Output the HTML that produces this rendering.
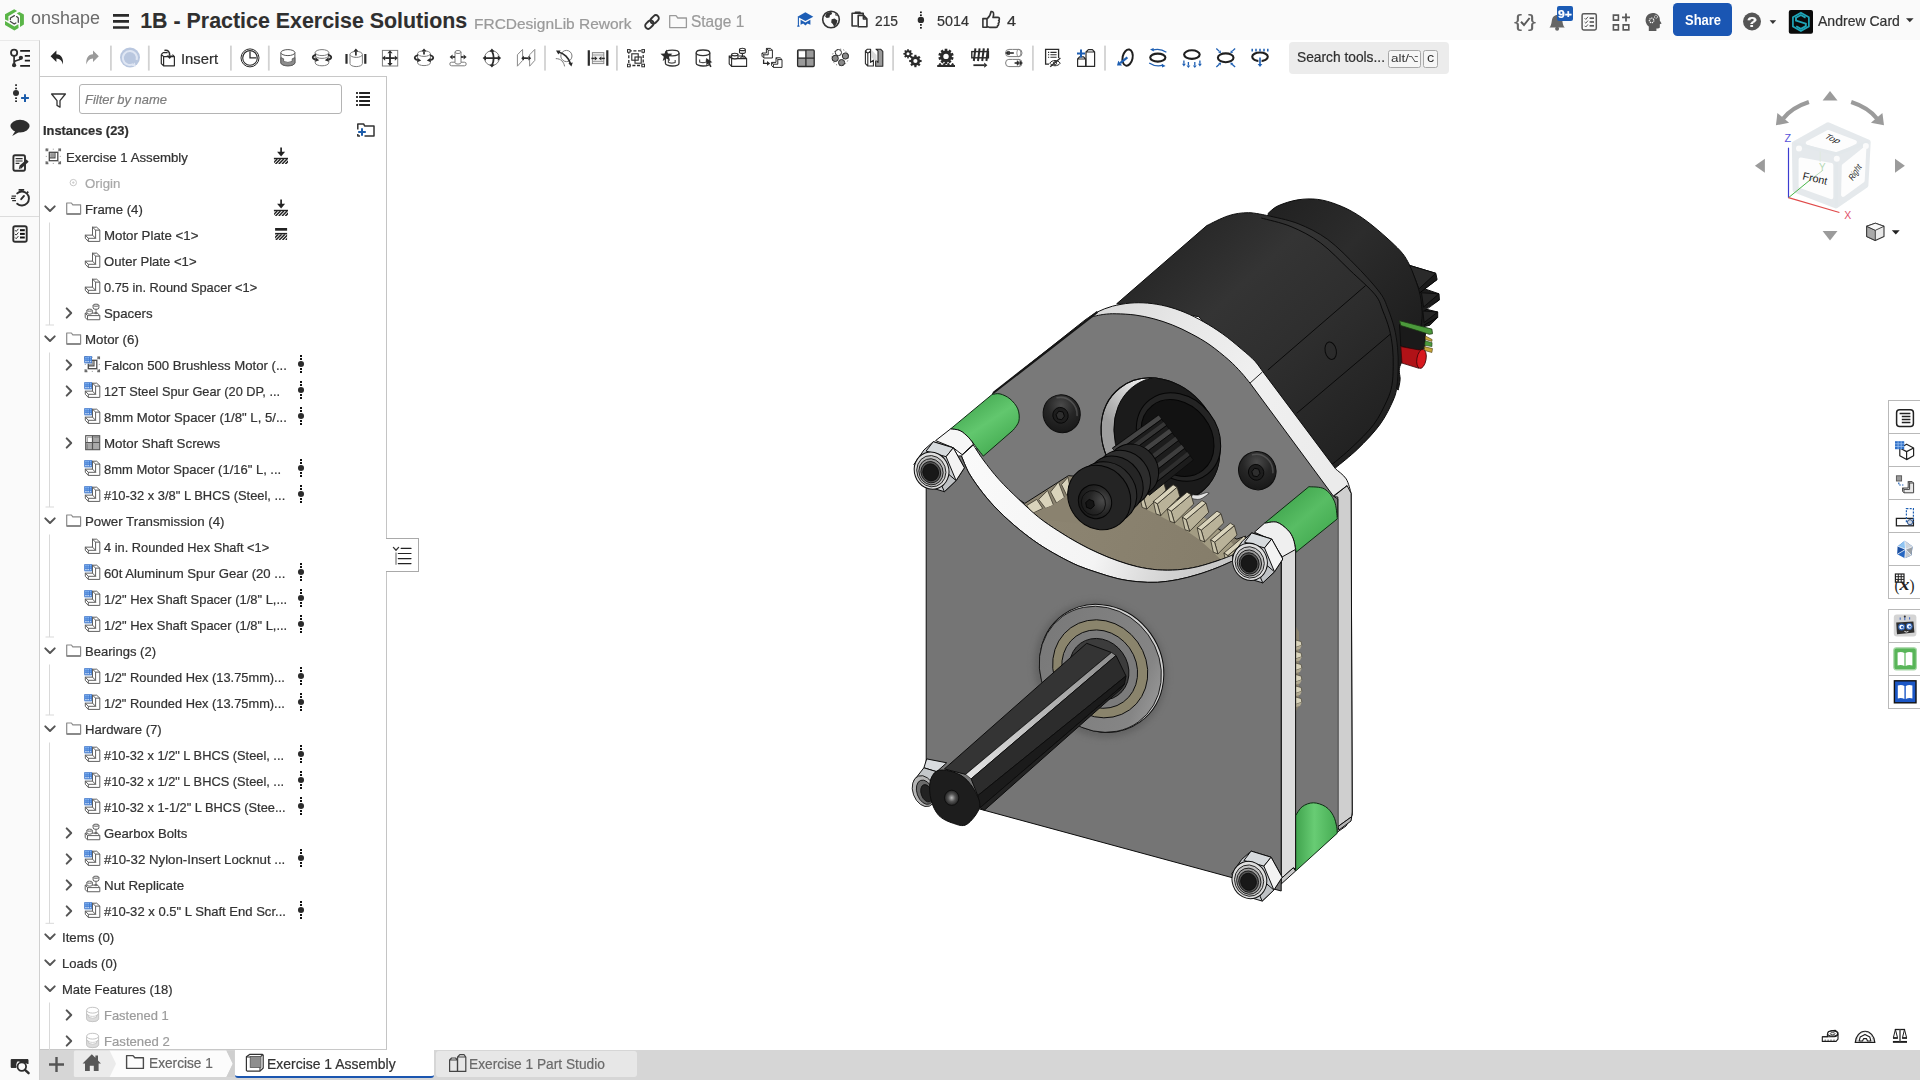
<!DOCTYPE html>
<html lang="en"><head><meta charset="utf-8"><title>1B - Practice Exercise Solutions | Exercise 1 Assembly</title>
<style>
*{box-sizing:border-box;margin:0;padding:0}
html,body{width:1920px;height:1080px;overflow:hidden;background:#fff;font-family:"Liberation Sans",sans-serif}
.t{position:absolute;white-space:pre;line-height:1;transform-origin:0 0;display:block;-webkit-text-stroke:.22px currentColor}
.abs,svg.i{position:absolute}
.abs{z-index:1}
svg.i{z-index:2;pointer-events:none}
.t{z-index:4}
.top{z-index:3}
svg.i{overflow:visible}
#topbar{position:absolute;left:0;top:0;width:1920px;height:40px;background:#fafafa}
#toolbar{position:absolute;left:40px;top:40px;width:1880px;height:37px;background:#fff}
#strip{position:absolute;left:0;top:40px;width:40px;height:1040px;background:#fafafa;border-right:1px solid #d0d0d0;border-top:1px solid #e9e9e9}
#panel{position:absolute;left:40px;top:76px;width:347px;height:974px;background:#fff;border-top:1px solid #c8c8c8;border-right:1px solid #c4c4c4;border-bottom:1px solid #c8c8c8;overflow:hidden}
#bottombar{position:absolute;left:40px;top:1050px;width:1880px;height:30px;background:#d6d6d6}
#canvas{position:absolute;left:387px;top:77px;width:1533px;height:973px;background:#fff;overflow:hidden}
</style></head>
<body>
<div id="canvas"></div>
<svg class="i" style="left:0;top:0" width="1920" height="1080" viewBox="0 0 1920 1080"><defs>
<linearGradient id="gBody" gradientUnits="userSpaceOnUse" x1="1190" y1="215" x2="1400" y2="440"><stop offset="0" stop-color="#262626"/><stop offset=".28" stop-color="#343434"/><stop offset=".55" stop-color="#2e2e2e"/><stop offset="1" stop-color="#1f1f1f"/></linearGradient>
<linearGradient id="gCap" gradientUnits="userSpaceOnUse" x1="1290" y1="195" x2="1430" y2="330"><stop offset="0" stop-color="#222"/><stop offset=".4" stop-color="#2c2c2c"/><stop offset="1" stop-color="#1d1d1d"/></linearGradient>
<linearGradient id="gBand" gradientUnits="userSpaceOnUse" x1="960" y1="450" x2="1240" y2="560"><stop offset="0" stop-color="#fafafa"/><stop offset=".55" stop-color="#f4f4f4"/><stop offset=".8" stop-color="#d2d2d2"/><stop offset="1" stop-color="#c4c4c4"/></linearGradient>
<linearGradient id="gArch" gradientUnits="userSpaceOnUse" x1="1090" y1="310" x2="1340" y2="470"><stop offset="0" stop-color="#d9d9d9"/><stop offset=".3" stop-color="#e8e8e8"/><stop offset=".6" stop-color="#f0f0f0"/><stop offset="1" stop-color="#ebebeb"/></linearGradient>
<linearGradient id="gGreen1" gradientUnits="userSpaceOnUse" x1="975" y1="395" x2="1005" y2="440"><stop offset="0" stop-color="#43a850"/><stop offset=".55" stop-color="#62c76e"/><stop offset="1" stop-color="#4bb258"/></linearGradient>
<linearGradient id="gGreen2" gradientUnits="userSpaceOnUse" x1="1290" y1="495" x2="1325" y2="535"><stop offset="0" stop-color="#43a850"/><stop offset=".5" stop-color="#58bd64"/><stop offset="1" stop-color="#46ad53"/></linearGradient>
<linearGradient id="gGreen3" gradientUnits="userSpaceOnUse" x1="1295" y1="0" x2="1338" y2="0"><stop offset="0" stop-color="#3fa24c"/><stop offset=".45" stop-color="#68cc74"/><stop offset="1" stop-color="#44aa51"/></linearGradient>
<linearGradient id="gShaftHi" gradientUnits="userSpaceOnUse" x1="970" y1="776" x2="1110" y2="655"><stop offset="0" stop-color="#e4e4e4"/><stop offset=".5" stop-color="#b9b9b9"/><stop offset="1" stop-color="#8d8d8d"/></linearGradient>
<radialGradient id="gHole" cx=".35" cy=".4" r=".7"><stop offset="0" stop-color="#3a3a3a"/><stop offset="1" stop-color="#161616"/></radialGradient>
<radialGradient id="gScrew" cx=".6" cy=".3" r=".75"><stop offset="0" stop-color="#4a4a4a"/><stop offset=".5" stop-color="#262626"/><stop offset="1" stop-color="#171717"/></radialGradient>
<radialGradient id="gNut" cx=".5" cy=".5" r=".5"><stop offset="0" stop-color="#111"/><stop offset=".42" stop-color="#1a1a1a"/><stop offset=".5" stop-color="#777"/><stop offset=".62" stop-color="#d8d8d8"/><stop offset=".8" stop-color="#f0f0f0"/><stop offset="1" stop-color="#b8b8b8"/></radialGradient>
<linearGradient id="gCres" gradientUnits="userSpaceOnUse" x1="1105" y1="385" x2="1110" y2="470"><stop offset="0" stop-color="#fafafa"/><stop offset=".5" stop-color="#e2e2e2"/><stop offset="1" stop-color="#9d9d9d"/></linearGradient>
<filter id="blur3" x="-20%" y="-20%" width="140%" height="140%"><feGaussianBlur stdDeviation="3"/></filter>

<linearGradient id="gGearF" gradientUnits="userSpaceOnUse" x1="1030" y1="500" x2="1230" y2="560"><stop offset="0" stop-color="#8d8572"/><stop offset="1" stop-color="#857d6a"/></linearGradient>
<linearGradient id="gFlange" gradientUnits="userSpaceOnUse" x1="1050" y1="700" x2="1160" y2="630"><stop offset="0" stop-color="#7a7a7a"/><stop offset=".8" stop-color="#858585"/><stop offset="1" stop-color="#9a9a9a"/></linearGradient>
<radialGradient id="gBoltHole" cx=".5" cy=".5" r=".5"><stop offset="0" stop-color="#bbb"/><stop offset=".5" stop-color="#555"/><stop offset="1" stop-color="#222"/></radialGradient>
</defs><path d="M1409.2,265.3 L1435.8,273.3 L1437.1,279.6 L1424.7,288.9 L1439.0,293.8 L1439.4,299.9 L1425.4,309.0 L1437.7,312.0 L1437.7,317.4 L1429.9,325.2 L1418.9,327.8 L1417.6,295.4 Z" fill="#1b1b1b" stroke="#0d0d0d" stroke-width="1.0" stroke-linejoin="round" />
<path d="M1418.9,293.5 L1437.1,279.6M1422.8,312.3 L1439.4,299.9M1424.1,325.2 L1437.7,317.4" fill="none" stroke="#000" stroke-width="0.8" stroke-linejoin="round" />
<path d="M1409.2,265.3 L1435.8,273.3 L1418.9,288.9 L1415.0,278.5 Z" fill="#2a2a2a" stroke="#0d0d0d" stroke-width="1.0" stroke-linejoin="round" />
<path d="M1421.5,292.8 L1439.0,293.8 L1423.5,307.1 Z" fill="#262626" stroke="#0d0d0d" stroke-width="1.0" stroke-linejoin="round" />
<path d="M1422.8,311.0 L1437.7,312.0 L1424.1,322.6 Z" fill="#242424" stroke="#0d0d0d" stroke-width="1.0" stroke-linejoin="round" />
<path d="M1268.2,213.3 C1269.9,212.0 1273.2,208.0 1278.1,205.8 C1283.1,203.5 1291.3,200.9 1298.0,199.8 C1304.6,198.8 1311.2,198.6 1317.8,199.4 C1324.4,200.2 1331.0,202.2 1337.6,204.8 C1344.2,207.3 1350.8,210.5 1357.4,214.7 C1364.0,218.8 1370.2,223.6 1377.2,229.5 C1384.2,235.4 1394.2,244.4 1399.5,250.0 C1404.7,255.6 1405.9,258.2 1408.5,263.0 C1411.1,267.7 1413.1,273.1 1415.0,278.5 C1417.0,283.9 1419.0,289.8 1420.2,295.4 C1421.4,301.0 1421.9,307.7 1422.2,312.3 C1422.4,316.8 1421.6,320.9 1421.5,322.6 L1418.9,340.8 C1415.9,344.7 1403.9,357.7 1400.8,364.1 C1397.6,370.6 1400.5,375.4 1400.1,379.7 C1399.7,384.0 1398.5,388.3 1398.2,390.1 L1340.0,330.0 L1268.0,230.0 Z" fill="url(#gCap)" stroke="#0d0d0d" stroke-width="1.0" stroke-linejoin="round" />
<path d="M1400.8,346.0 L1399.5,324.6 L1425.4,333.0 L1424.7,348.6 L1417.6,350.5 Z" fill="#1a1a1a" stroke="#0d0d0d" stroke-width="1.0" stroke-linejoin="round" />
<path d="M1399.5,320.7 L1431.9,329.1 L1432.5,333.7 L1429.3,334.3 L1400.8,325.5 Z" fill="#4c9a3c" stroke="#1c3a14" stroke-width="0.8" stroke-linejoin="round" />
<path d="M1425.4,335.9 L1432.1,339.5 L1431.9,341.4 L1425.4,339.5 Z" fill="#c9a63a" stroke="#4a3c10" stroke-width="0.6" stroke-linejoin="round" />
<path d="M1425.1,340.8 L1432.1,342.7 L1431.9,346.6 L1424.7,345.3 Z" fill="#4c9a3c" stroke="#1c3a14" stroke-width="0.6" stroke-linejoin="round" />
<path d="M1424.1,346.6 L1432.5,348.6 L1431.9,352.5 L1424.7,350.5 Z" fill="#c9a63a" stroke="#4a3c10" stroke-width="0.6" stroke-linejoin="round" />
<path d="M1400.8,346.6 L1418.9,349.9 L1422.8,349.9 L1418.9,368.3 L1402.0,363.1 Z" fill="#b01217" stroke="#3a0507" stroke-width="0.8" stroke-linejoin="round" />
<ellipse cx="1421.5" cy="358.9" rx="4.6" ry="9.6" transform="rotate(10.0 1421.5 358.9)" fill="#d8191f" stroke="#3a0507" stroke-width="0.8" />
<path d="M1116.7,303.8 L1206.8,225.6 L1206.8,225.6 C1210.4,223.9 1221.7,217.8 1228.6,215.7 C1235.5,213.5 1241.8,212.7 1248.4,212.7 C1255.0,212.7 1264.9,215.2 1268.2,215.7 L1268.2,215.7 C1273.2,217.0 1288.0,219.6 1298.0,223.6 C1307.9,227.6 1317.8,232.2 1327.7,239.4 C1337.6,246.7 1348.7,258.3 1357.4,267.2 C1366.1,276.1 1374.9,285.9 1380.0,292.8 C1385.1,299.7 1385.4,302.5 1387.8,308.4 C1390.2,314.2 1392.6,321.3 1394.3,327.8 C1395.9,334.3 1396.9,340.8 1397.5,347.3 C1398.2,353.8 1398.3,360.2 1398.2,366.7 C1398.1,373.2 1397.7,380.6 1396.9,386.2 C1396.1,391.7 1396.1,393.6 1393.3,400.0 C1390.5,406.4 1385.9,416.3 1380.0,424.4 C1374.1,432.6 1365.2,441.7 1357.8,448.9 C1350.4,456.1 1339.3,464.6 1335.6,467.8 L1251.1,383.3 L1198.9,316.7 Z" fill="url(#gBody)" stroke="#0d0d0d" stroke-width="1.0" stroke-linejoin="round" />
<path d="M1261.3,218.0 C1266.2,219.5 1281.1,222.4 1291.0,226.6 C1300.9,230.7 1310.9,235.7 1320.7,243.0 C1330.5,250.3 1340.8,261.5 1349.9,270.2 C1358.9,278.8 1369.6,287.9 1375.1,294.7 C1380.6,301.5 1380.5,305.2 1382.9,311.0 C1385.2,316.7 1387.7,323.0 1389.3,329.1 C1391.0,335.3 1391.9,341.7 1392.6,347.9 C1393.2,354.2 1393.3,360.5 1393.2,366.7 C1393.1,373.0 1393.0,379.8 1391.9,385.5 C1390.8,391.3 1389.7,394.6 1386.7,401.1 C1383.6,407.6 1379.5,416.8 1373.8,424.4 C1368.0,432.1 1359.3,440.4 1352.2,447.1 C1345.2,453.9 1335.0,461.9 1331.6,464.9" fill="none" stroke="#0a0a0a" stroke-width="1.0" stroke-linejoin="round" />
<path d="M1267.8,370.0 L1365.6,285.6" fill="none" stroke="#0a0a0a" stroke-width="1" stroke-linejoin="round" />
<path d="M1296.7,413.3 L1390.0,334.4" fill="none" stroke="#0a0a0a" stroke-width="1" stroke-linejoin="round" />
<ellipse cx="1330.7" cy="350.7" rx="5.6" ry="8.8" transform="rotate(-12.0 1330.7 350.7)" fill="none" stroke="#0a0a0a" stroke-width="1" />
<path d="M945.0,560.0 L993.1,393.0 L1085.0,320.0 L1085.0,320.0 C1087.1,318.6 1092.9,314.2 1097.5,311.9 C1102.1,309.6 1107.1,307.7 1112.5,306.2 C1117.9,304.8 1124.2,303.6 1130.0,303.1 C1135.8,302.6 1141.5,302.6 1147.5,303.1 C1153.5,303.6 1160.0,304.7 1166.2,306.2 C1172.5,307.8 1178.8,309.9 1185.0,312.5 C1191.2,315.1 1197.5,318.3 1203.8,321.9 C1210.0,325.4 1216.2,329.3 1222.5,333.8 C1228.8,338.2 1235.8,344.2 1241.2,348.8 C1246.7,353.3 1251.5,357.5 1255.0,361.2 C1258.5,365.0 1261.2,369.6 1262.5,371.2 L1262.5,371.2 L1335.6,468.9 L1335.6,468.9 C1337.3,470.6 1343.6,474.8 1346.2,478.9 C1348.8,483.0 1350.3,490.9 1351.1,493.3 L1352.2,815.0 L1346.0,826.0 L1337.5,832.0 L1337.5,560.0 Z" fill="url(#gArch)" stroke="#0d0d0d" stroke-width="1.0" stroke-linejoin="round" />
<path d="M1333.3,496.7 L1347.1,485.6 L1351.1,493.3 L1352.2,812.0 L1351.7,816.7 L1337.8,826.7 L1337.8,497.0 Z" fill="#cfcfcf" stroke="#0d0d0d" stroke-width="1.0" stroke-linejoin="round" />
<path d="M1337.8,826.7 L1351.7,816.7 L1351.0,821.0 L1339.0,830.0 Z" fill="#b5b5b5" stroke="#0d0d0d" stroke-width="1.0" stroke-linejoin="round" />
<path d="M945.0,560.0 L993.1,393.0 L1091.2,316.9 L1091.2,316.9 C1093.3,316.5 1099.6,314.9 1103.8,314.4 C1107.9,313.9 1111.0,313.6 1116.2,313.8 C1121.5,313.9 1128.8,314.2 1135.0,315.0 C1141.2,315.8 1147.5,317.1 1153.8,318.8 C1160.0,320.4 1166.2,322.5 1172.5,325.0 C1178.8,327.5 1185.0,330.4 1191.2,333.8 C1197.5,337.1 1203.8,340.6 1210.0,345.0 C1216.2,349.4 1223.5,355.4 1228.8,360.0 C1234.0,364.6 1237.7,368.6 1241.2,372.5 C1244.8,376.4 1248.5,381.4 1250.0,383.1 L1250.0,383.1 L1333.3,496.0 L1337.8,499.0 L1337.8,832.0 L1295.0,870.0 L1295.0,600.0 Z" fill="#797979" stroke="#0d0d0d" stroke-width="1.0" stroke-linejoin="round" />
<path d="M993.1,393.0 L1091.2,316.9 L1097.5,311.9" fill="none" stroke="#161616" stroke-width="2.2" stroke-linejoin="round" />
<path d="M1250.0,383.1 L1262.5,371.9" fill="none" stroke="#0d0d0d" stroke-width="0.9" stroke-linejoin="round" />
<path d="M1333.3,496.0 L1347.1,485.6" fill="none" stroke="#0d0d0d" stroke-width="0.9" stroke-linejoin="round" />
<clipPath id="cpHole"><ellipse cx="1160.5" cy="440" rx="66" ry="55" transform="rotate(52 1160.5 440)"/></clipPath>
<ellipse cx="1160.5" cy="440.0" rx="66.0" ry="55.0" transform="rotate(52.0 1160.5 440.0)" fill="url(#gCres)" stroke="#0d0d0d" stroke-width="1.0" />
<g clip-path="url(#cpHole)"><ellipse cx="1178.0" cy="443.0" rx="72.0" ry="58.0" transform="rotate(50.0 1178.0 443.0)" fill="#1b1b1b" stroke="#000" stroke-width="0.8" /></g>
<ellipse cx="1160.5" cy="440.0" rx="66.0" ry="55.0" transform="rotate(52.0 1160.5 440.0)" fill="none" stroke="#0d0d0d" stroke-width="1.0" />
<path d="M1190.8,498.3 C1192.4,498.5 1196.9,500.0 1200.0,499.2 C1203.1,498.3 1207.6,494.3 1209.2,493.3 L1206.7,492.5 C1205.3,492.9 1200.7,494.6 1198.3,495.0 C1196.0,495.4 1193.5,494.7 1192.5,494.7 Z" fill="#e3e3e3" stroke="#0d0d0d" stroke-width="0.6" stroke-linejoin="round" />
<ellipse cx="1178.5" cy="437.0" rx="47.0" ry="39.0" transform="rotate(52.0 1178.5 437.0)" fill="#242424" stroke="#050505" stroke-width="1" />
<ellipse cx="1177.5" cy="438.0" rx="41.0" ry="33.5" transform="rotate(52.0 1177.5 438.0)" fill="#121212" stroke="#050505" stroke-width="1" />
<ellipse cx="1061.7" cy="413.7" rx="18.4" ry="19.1" transform="rotate(-30.0 1061.7 413.7)" fill="url(#gScrew)" stroke="#0d0d0d" stroke-width="1.0" /><path d="M1057.1,397.8 A16.6,17.3 0 0 1 1077.1,415.5" fill="none" stroke="#6a6a6a" stroke-width="1.6" opacity=".55" stroke-linecap="round"/><ellipse cx="1060.5" cy="415.3" rx="7.6" ry="8.0" transform="rotate(-30.0 1060.5 415.3)" fill="#1d1d1d" stroke="#050505" stroke-width="0.8" /><path d="M1064.4,416.2 L1061.7,419.7 L1057.6,418.9 L1056.1,414.7 L1058.8,411.2 L1063.0,412.0 Z" fill="#2e2e2e" stroke="#050505" stroke-width="0.9" stroke-linejoin="round" />
<ellipse cx="1257.3" cy="470.7" rx="18.6" ry="19.3" transform="rotate(-30.0 1257.3 470.7)" fill="url(#gScrew)" stroke="#0d0d0d" stroke-width="1.0" /><path d="M1252.6,454.7 A16.7,17.5 0 0 1 1272.9,472.6" fill="none" stroke="#6a6a6a" stroke-width="1.6" opacity=".55" stroke-linecap="round"/><ellipse cx="1256.1" cy="472.3" rx="7.6" ry="8.0" transform="rotate(-30.0 1256.1 472.3)" fill="#1d1d1d" stroke="#050505" stroke-width="0.8" /><path d="M1260.0,473.3 L1257.3,476.7 L1253.2,475.9 L1251.8,471.7 L1254.5,468.3 L1258.6,469.1 Z" fill="#2e2e2e" stroke="#050505" stroke-width="0.9" stroke-linejoin="round" />
<path d="M1018.9,499.4 C1022.2,502.4 1032.1,512.0 1038.7,517.3 C1045.3,522.6 1051.9,526.9 1058.5,531.1 C1065.1,535.4 1071.7,539.4 1078.3,543.0 C1084.9,546.7 1091.5,550.0 1098.1,552.9 C1104.7,555.9 1111.3,558.6 1118.0,560.9 C1124.6,563.2 1131.2,565.3 1137.8,566.8 C1144.4,568.3 1151.0,569.3 1157.6,569.8 C1164.2,570.3 1170.8,570.3 1177.4,569.8 C1184.0,569.3 1190.6,568.3 1197.2,566.8 C1203.8,565.3 1211.1,562.8 1217.0,560.9 C1223.0,558.9 1230.2,555.9 1232.9,554.9 L1245.7,536.1 L1236.8,539.1 L1143.7,487.6 L1118.0,479.6 L1068.4,475.7 L1024.8,503.4 Z" fill="url(#gGearF)" stroke="#0d0d0d" stroke-width="1.0" stroke-linejoin="round" />
<path d="M1143.4,497.4 L1149.3,486.7 L1163.2,493.1 L1177.1,500.6 L1192.1,508.9 L1207.1,519.4 L1220.4,531.4 L1233.8,544.8 L1231.2,567.2 L1226.7,565.6 L1213.3,552.2 L1200.0,540.2 L1185.0,529.7 L1170.0,521.3 L1156.1,513.9 L1142.2,507.4 Z" fill="#a39c83" />
<path d="M1143.4,497.4 L1163.2,480.8 L1165.9,490.1 L1146.8,509.1 Z" fill="#b9b299" stroke="#2f2b22" stroke-width="0.8" stroke-linejoin="round" />
<path d="M1139.4,495.0 L1159.2,478.3 L1163.2,480.8 L1143.4,497.4 Z" fill="#d9d3bb" stroke="#2f2b22" stroke-width="0.8" stroke-linejoin="round" />
<path d="M1139.4,495.0 L1143.4,497.4 L1146.8,509.1 L1142.2,507.4 Z" fill="#c9c3aa" stroke="#2f2b22" stroke-width="0.8" stroke-linejoin="round" />
<path d="M1157.3,503.9 L1177.1,487.2 L1179.8,496.6 L1160.7,515.6 Z" fill="#b9b299" stroke="#2f2b22" stroke-width="0.8" stroke-linejoin="round" />
<path d="M1153.3,501.4 L1173.1,484.8 L1177.1,487.2 L1157.3,503.9 Z" fill="#d9d3bb" stroke="#2f2b22" stroke-width="0.8" stroke-linejoin="round" />
<path d="M1153.3,501.4 L1157.3,503.9 L1160.7,515.6 L1156.1,513.9 Z" fill="#c9c3aa" stroke="#2f2b22" stroke-width="0.8" stroke-linejoin="round" />
<path d="M1171.2,511.3 L1191.0,494.7 L1193.7,504.0 L1174.6,523.0 Z" fill="#b9b299" stroke="#2f2b22" stroke-width="0.8" stroke-linejoin="round" />
<path d="M1167.2,508.9 L1187.0,492.2 L1191.0,494.7 L1171.2,511.3 Z" fill="#d9d3bb" stroke="#2f2b22" stroke-width="0.8" stroke-linejoin="round" />
<path d="M1167.2,508.9 L1171.2,511.3 L1174.6,523.0 L1170.0,521.3 Z" fill="#c9c3aa" stroke="#2f2b22" stroke-width="0.8" stroke-linejoin="round" />
<path d="M1186.2,519.7 L1206.0,503.0 L1208.7,512.3 L1189.6,531.3 Z" fill="#b9b299" stroke="#2f2b22" stroke-width="0.8" stroke-linejoin="round" />
<path d="M1182.2,517.2 L1202.0,500.6 L1206.0,503.0 L1186.2,519.7 Z" fill="#d9d3bb" stroke="#2f2b22" stroke-width="0.8" stroke-linejoin="round" />
<path d="M1182.2,517.2 L1186.2,519.7 L1189.6,531.3 L1185.0,529.7 Z" fill="#c9c3aa" stroke="#2f2b22" stroke-width="0.8" stroke-linejoin="round" />
<path d="M1201.2,530.2 L1221.0,513.6 L1223.7,522.9 L1204.6,541.9 Z" fill="#b9b299" stroke="#2f2b22" stroke-width="0.8" stroke-linejoin="round" />
<path d="M1197.2,527.8 L1217.0,511.1 L1221.0,513.6 L1201.2,530.2 Z" fill="#d9d3bb" stroke="#2f2b22" stroke-width="0.8" stroke-linejoin="round" />
<path d="M1197.2,527.8 L1201.2,530.2 L1204.6,541.9 L1200.0,540.2 Z" fill="#c9c3aa" stroke="#2f2b22" stroke-width="0.8" stroke-linejoin="round" />
<path d="M1214.6,542.2 L1234.3,525.6 L1237.0,534.9 L1217.9,553.9 Z" fill="#b9b299" stroke="#2f2b22" stroke-width="0.8" stroke-linejoin="round" />
<path d="M1210.6,539.8 L1230.3,523.1 L1234.3,525.6 L1214.6,542.2 Z" fill="#d9d3bb" stroke="#2f2b22" stroke-width="0.8" stroke-linejoin="round" />
<path d="M1210.6,539.8 L1214.6,542.2 L1217.9,553.9 L1213.3,552.2 Z" fill="#c9c3aa" stroke="#2f2b22" stroke-width="0.8" stroke-linejoin="round" />
<path d="M1227.9,555.6 L1247.7,538.9 L1250.3,548.2 L1231.2,567.2 Z" fill="#b9b299" stroke="#2f2b22" stroke-width="0.8" stroke-linejoin="round" />
<path d="M1223.9,553.1 L1243.7,536.4 L1247.7,538.9 L1227.9,555.6 Z" fill="#d9d3bb" stroke="#2f2b22" stroke-width="0.8" stroke-linejoin="round" />
<path d="M1223.9,553.1 L1227.9,555.6 L1231.2,567.2 L1226.7,565.6 Z" fill="#c9c3aa" stroke="#2f2b22" stroke-width="0.8" stroke-linejoin="round" />
<path d="M1026.8,505.4 L1036.7,499.4 L1042.7,508.4 L1031.8,513.7 Z" fill="#d9d3bb" stroke="#3b372c" stroke-width="0.8" stroke-linejoin="round" />
<path d="M1038.7,499.4 L1047.6,490.5 L1053.6,505.4 L1045.6,508.4 Z" fill="#d9d3bb" stroke="#3b372c" stroke-width="0.8" stroke-linejoin="round" />
<path d="M1050.6,491.9 L1058.5,482.0 L1064.5,497.5 L1056.5,503.0 Z" fill="#d9d3bb" stroke="#3b372c" stroke-width="0.8" stroke-linejoin="round" />
<path d="M1061.5,484.6 L1068.0,477.2 L1070.4,489.5 L1066.8,495.5 Z" fill="#d9d3bb" stroke="#3b372c" stroke-width="0.8" stroke-linejoin="round" />
<path d="M1024.8,503.4 L1031.8,513.7 L1045.6,508.4 L1056.5,503.0 L1066.8,495.5 L1074.4,499.4 L1078.3,523.2 L1038.7,519.3 Z" fill="#8a826f" />
<path d="M1112.4,448.1 L1158.3,415.1 L1193.4,459.9 L1149.3,495.3 Z" fill="#1c1c1c" stroke="#0d0d0d" stroke-width="1.0" stroke-linejoin="round" />
<path d="M1114.2,450.4 L1160.0,417.3" fill="none" stroke="#454545" stroke-width="4.5" stroke-linejoin="round" />
<path d="M1115.8,452.5 L1161.6,419.4" fill="none" stroke="#050505" stroke-width="0.9" stroke-linejoin="round" />
<path d="M1119.4,457.0 L1164.9,423.6" fill="none" stroke="#353535" stroke-width="4.2" stroke-linejoin="round" />
<path d="M1121.0,459.1 L1166.6,425.6" fill="none" stroke="#050505" stroke-width="0.9" stroke-linejoin="round" />
<path d="M1125.3,464.6 L1170.6,430.8" fill="none" stroke="#434343" stroke-width="4.8" stroke-linejoin="round" />
<path d="M1126.9,466.6 L1172.2,432.8" fill="none" stroke="#050505" stroke-width="0.9" stroke-linejoin="round" />
<path d="M1131.8,472.8 L1176.7,438.6" fill="none" stroke="#363636" stroke-width="4.8" stroke-linejoin="round" />
<path d="M1133.4,474.9 L1178.3,440.7" fill="none" stroke="#050505" stroke-width="0.9" stroke-linejoin="round" />
<path d="M1138.2,481.1 L1182.9,446.5" fill="none" stroke="#3e3e3e" stroke-width="4.6" stroke-linejoin="round" />
<path d="M1139.8,483.2 L1184.5,448.5" fill="none" stroke="#050505" stroke-width="0.9" stroke-linejoin="round" />
<path d="M1144.1,488.7 L1188.5,453.6" fill="none" stroke="#2f2f2f" stroke-width="4" stroke-linejoin="round" />
<path d="M1145.7,490.7 L1190.1,455.7" fill="none" stroke="#050505" stroke-width="0.9" stroke-linejoin="round" />
<ellipse cx="1133.3" cy="470.0" rx="27.0" ry="24.3" transform="rotate(52.0 1133.3 470.0)" fill="#262626" stroke="#050505" stroke-width="1" />
<ellipse cx="1123.3" cy="478.3" rx="29.0" ry="26.1" transform="rotate(52.0 1123.3 478.3)" fill="#2d2d2d" stroke="#050505" stroke-width="1" />
<ellipse cx="1115.0" cy="485.0" rx="30.0" ry="27.0" transform="rotate(52.0 1115.0 485.0)" fill="#252525" stroke="#050505" stroke-width="1" />
<ellipse cx="1106.7" cy="492.5" rx="32.0" ry="28.8" transform="rotate(52.0 1106.7 492.5)" fill="#2b2b2b" stroke="#050505" stroke-width="1" />
<ellipse cx="1099.2" cy="497.5" rx="33.5" ry="30.2" transform="rotate(52.0 1099.2 497.5)" fill="#242424" stroke="#050505" stroke-width="1" />
<ellipse cx="1095.0" cy="501.7" rx="17.4" ry="16.2" transform="rotate(52.0 1095.0 501.7)" fill="url(#gScrew)" stroke="#050505" stroke-width="1" />
<ellipse cx="1093.4" cy="502.9" rx="12.6" ry="11.8" transform="rotate(52.0 1093.4 502.9)" fill="none" stroke="#0a0a0a" stroke-width="0.8" />
<path d="M1094.3,505.8 L1090.8,508.9 L1086.5,507.3 L1085.7,502.5 L1089.2,499.4 L1093.5,501.1 Z" fill="#141414" stroke="#000" stroke-width="0.8" stroke-linejoin="round" />
<path d="M1295.0,548.0 L1337.8,517.0 L1337.8,832.0 L1295.0,870.0 Z" fill="#767676" />
<path d="M1295.6,626.0 L1299.0,632.0 L1299.0,706.0 L1295.6,712.0 Z" fill="#8a826f" />
<path d="M1295.6,640.0 L1301.2,641.6 L1301.8,645.2 L1295.6,647.4 Z" fill="#d9d3bb" stroke="#3b372c" stroke-width="0.6" stroke-linejoin="round" />
<path d="M1295.6,647.4 L1301.8,645.2 L1300.0,649.0 L1295.6,650.0 Z" fill="#b3ab92" />
<path d="M1295.6,651.5 L1301.2,653.1 L1301.8,656.7 L1295.6,658.9 Z" fill="#d9d3bb" stroke="#3b372c" stroke-width="0.6" stroke-linejoin="round" />
<path d="M1295.6,658.9 L1301.8,656.7 L1300.0,660.5 L1295.6,661.5 Z" fill="#b3ab92" />
<path d="M1295.6,663.0 L1301.2,664.6 L1301.8,668.2 L1295.6,670.4 Z" fill="#d9d3bb" stroke="#3b372c" stroke-width="0.6" stroke-linejoin="round" />
<path d="M1295.6,670.4 L1301.8,668.2 L1300.0,672.0 L1295.6,673.0 Z" fill="#b3ab92" />
<path d="M1295.6,674.5 L1301.2,676.1 L1301.8,679.7 L1295.6,681.9 Z" fill="#d9d3bb" stroke="#3b372c" stroke-width="0.6" stroke-linejoin="round" />
<path d="M1295.6,681.9 L1301.8,679.7 L1300.0,683.5 L1295.6,684.5 Z" fill="#b3ab92" />
<path d="M1295.6,686.0 L1301.2,687.6 L1301.8,691.2 L1295.6,693.4 Z" fill="#d9d3bb" stroke="#3b372c" stroke-width="0.6" stroke-linejoin="round" />
<path d="M1295.6,693.4 L1301.8,691.2 L1300.0,695.0 L1295.6,696.0 Z" fill="#b3ab92" />
<path d="M1295.6,697.0 L1301.2,698.6 L1301.8,702.2 L1295.6,704.4 Z" fill="#d9d3bb" stroke="#3b372c" stroke-width="0.6" stroke-linejoin="round" />
<path d="M1295.6,704.4 L1301.8,702.2 L1300.0,706.0 L1295.6,707.0 Z" fill="#b3ab92" />
<path d="M950.6,428.9 L992.2,394.4 L992.2,394.4 C993.5,394.4 997.0,393.1 1000.0,393.9 C1003.0,394.6 1007.0,396.4 1010.0,398.9 C1013.0,401.4 1016.3,405.2 1017.8,408.9 C1019.3,412.6 1019.6,417.6 1018.9,421.1 C1018.1,424.6 1014.3,428.5 1013.3,430.0 L1013.3,430.0 L983.3,456.1 L983.3,456.1 C982.2,454.7 979.1,450.8 976.7,447.8 C974.3,444.7 971.7,440.6 968.9,437.8 C966.1,434.9 963.1,432.0 960.0,430.6 C956.9,429.1 952.1,429.2 950.6,428.9 Z" fill="url(#gGreen1)" stroke="#0d2a12" stroke-width="1" stroke-linejoin="round" />
<path d="M1264.4,523.3 L1308.9,486.7 L1308.9,486.7 C1311.5,487.0 1320.2,486.5 1324.4,488.9 C1328.7,491.3 1332.3,496.1 1334.4,501.1 C1336.6,506.1 1336.9,515.9 1337.3,518.9 L1337.3,518.9 L1296.1,552.2 L1295.6,549.4 C1295.2,547.7 1294.6,542.1 1293.3,538.9 C1292.0,535.6 1290.6,532.8 1287.8,530.0 C1285.0,527.2 1280.6,523.3 1276.7,522.2 C1272.8,521.1 1266.5,523.1 1264.4,523.3 Z" fill="url(#gGreen2)" stroke="#0d2a12" stroke-width="1" stroke-linejoin="round" />
<path d="M1295.6,871.1 L1295.6,815.6 L1295.6,815.6 C1296.7,814.1 1299.3,808.8 1302.2,806.7 C1305.2,804.5 1309.4,802.8 1313.3,802.8 C1317.2,802.8 1322.2,804.5 1325.6,806.7 C1328.9,808.8 1331.5,812.2 1333.3,815.6 C1335.2,818.9 1336.0,823.7 1336.7,826.7 C1337.3,829.6 1337.1,832.2 1337.2,833.3 L1337.2,833.3 Z" fill="url(#gGreen3)" stroke="#0d2a12" stroke-width="1" stroke-linejoin="round" />
<path d="M1281.2,556.0 L1295.6,548.0 L1295.6,869.0 L1293.3,867.8 L1281.2,878.6 Z" fill="#dcdcdc" stroke="#0d0d0d" stroke-width="1.0" stroke-linejoin="round" />
<path d="M1281.2,878.6 L1293.3,867.8 L1295.6,871.0 L1281.2,884.0 Z" fill="#c9c9c9" stroke="#0d0d0d" stroke-width="1.0" stroke-linejoin="round" />
<path d="M1254.4,532.2 L1264.4,523.3 L1264.4,523.3 C1266.5,523.1 1272.8,521.1 1276.7,522.2 C1280.6,523.3 1285.0,527.2 1287.8,530.0 C1290.6,532.8 1292.0,535.6 1293.3,538.9 C1294.6,542.1 1295.2,547.7 1295.6,549.4 L1282.2,556.9 L1270.6,539.4 Z" fill="#efefef" stroke="#0d0d0d" stroke-width="1.0" stroke-linejoin="round" />
<path d="M935.6,440.6 L950.6,428.9 L950.6,428.9 C952.1,429.2 956.9,429.1 960.0,430.6 C963.1,432.0 966.6,435.5 968.9,437.8 C971.1,440.1 972.8,443.1 973.6,444.2 L962.2,454.7 L953.3,447.8 Z" fill="#f6f6f6" stroke="#0d0d0d" stroke-width="1.0" stroke-linejoin="round" />
<path d="M973.3,445.0 C975.0,447.4 978.9,454.0 983.2,459.8 C987.5,465.6 993.1,473.0 999.1,479.6 C1005.0,486.2 1012.3,493.2 1018.9,499.4 C1025.5,505.7 1032.1,512.0 1038.7,517.3 C1045.3,522.6 1051.9,526.9 1058.5,531.1 C1065.1,535.4 1071.7,539.4 1078.3,543.0 C1084.9,546.7 1091.5,550.0 1098.1,552.9 C1104.7,555.9 1111.3,558.6 1118.0,560.9 C1124.6,563.2 1131.2,565.3 1137.8,566.8 C1144.4,568.3 1151.0,569.3 1157.6,569.8 C1164.2,570.3 1170.8,570.3 1177.4,569.8 C1184.0,569.3 1190.6,568.3 1197.2,566.8 C1203.8,565.3 1211.1,562.8 1217.0,560.9 C1223.0,558.9 1230.2,555.9 1232.9,554.9 L1232.9,560.9 C1230.2,562.0 1223.0,565.5 1217.0,567.8 C1211.1,570.1 1203.8,572.8 1197.2,574.7 C1190.6,576.7 1184.0,578.4 1177.4,579.7 C1170.8,580.9 1164.2,581.9 1157.6,582.3 C1151.0,582.6 1144.4,582.3 1137.8,581.7 C1131.2,581.1 1124.6,580.2 1118.0,578.7 C1111.3,577.2 1104.7,574.9 1098.1,572.8 C1091.5,570.6 1084.9,568.6 1078.3,565.8 C1071.7,563.0 1065.1,559.5 1058.5,555.9 C1051.9,552.3 1045.3,548.5 1038.7,544.0 C1032.1,539.6 1025.5,534.6 1018.9,529.2 C1012.3,523.7 1005.0,517.3 999.1,511.3 C993.1,505.4 988.2,499.8 983.2,493.5 C978.3,487.2 973.0,480.0 969.3,473.7 C965.7,467.4 962.7,458.8 961.4,455.9 Z" fill="url(#gBand)" stroke="#0d0d0d" stroke-width="1.0" stroke-linejoin="round" />
<path d="M973.6,444.2 L962.2,454.7" fill="none" stroke="#0d0d0d" stroke-width="0.9" stroke-linejoin="round" />
<path d="M926.2,794.5 L926.2,458.0 L961.4,455.9 L961.4,455.9 C962.7,458.8 965.7,467.4 969.3,473.7 C973.0,480.0 978.3,487.2 983.2,493.5 C988.2,499.8 993.1,505.4 999.1,511.3 C1005.0,517.3 1012.3,523.7 1018.9,529.2 C1025.5,534.6 1032.1,539.6 1038.7,544.0 C1045.3,548.5 1051.9,552.3 1058.5,555.9 C1065.1,559.5 1071.7,563.0 1078.3,565.8 C1084.9,568.6 1091.5,570.6 1098.1,572.8 C1104.7,574.9 1111.3,577.2 1118.0,578.7 C1124.6,580.2 1131.2,581.1 1137.8,581.7 C1144.4,582.3 1151.0,582.6 1157.6,582.3 C1164.2,581.9 1170.8,580.9 1177.4,579.7 C1184.0,578.4 1190.6,576.7 1197.2,574.7 C1203.8,572.8 1211.1,570.1 1217.0,567.8 C1223.0,565.5 1230.2,562.0 1232.9,560.9 L1232.9,560.9 L1281.2,556.0 L1281.2,891.0 Z" fill="#757575" stroke="#0d0d0d" stroke-width="1.0" stroke-linejoin="round" />
<ellipse cx="1100.2" cy="669.8" rx="70.0" ry="64.0" transform="rotate(54.4 1100.2 669.8)" fill="#555" filter="url(#blur3)" opacity=".55"/>
<ellipse cx="1101.7" cy="668.3" rx="66.0" ry="60.0" transform="rotate(54.4 1101.7 668.3)" fill="#cfcfcf" stroke="#0d0d0d" stroke-width="1.0" />
<ellipse cx="1100.3" cy="669.3" rx="65.0" ry="59.0" transform="rotate(54.4 1100.3 669.3)" fill="url(#gFlange)" stroke="#0d0d0d" stroke-width="0.8" />
<ellipse cx="1100.2" cy="668.8" rx="50.5" ry="46.0" transform="rotate(54.4 1100.2 668.8)" fill="#8a846c" stroke="#0d0d0d" stroke-width="0.9" />
<ellipse cx="1099.7" cy="669.1" rx="40.5" ry="36.5" transform="rotate(54.4 1099.7 669.1)" fill="#7b7b7b" stroke="#0d0d0d" stroke-width="0.9" />
<ellipse cx="1099.2" cy="669.3" rx="32.0" ry="28.5" transform="rotate(54.4 1099.2 669.3)" fill="#3c3c3c" stroke="#0d0d0d" stroke-width="0.9" />
<path d="M944.4,768.9 L1086.7,643.3 L1111.5,652.5 L965.6,774.4 Z" fill="#343434" stroke="#0d0d0d" stroke-width="1.0" stroke-linejoin="round" />
<path d="M965.6,774.4 L1111.5,652.5 L1116.0,655.5 L971.1,778.9 Z" fill="url(#gShaftHi)" stroke="#0d0d0d" stroke-width="0.7" stroke-linejoin="round" />
<path d="M971.1,778.9 L1116.0,655.5 L1126.0,676.0 L977.8,795.6 Z" fill="#2c2c2c" stroke="#0d0d0d" stroke-width="1.0" stroke-linejoin="round" />
<path d="M977.8,795.6 L1126.0,676.0 L1124.5,684.0 L980.0,807.8 Z" fill="#1b1b1b" stroke="#0d0d0d" stroke-width="1.0" stroke-linejoin="round" />
<path d="M980.0,807.8 L1124.5,684.0 L1121.0,689.0 L984.4,810.2 Z" fill="#222" stroke="#0d0d0d" stroke-width="1.0" stroke-linejoin="round" />
<path d="M926.7,758.9 L946.7,762.8 L936.7,771.7 L923.9,767.8 Z" fill="#d9dcdf" stroke="#0d0d0d" stroke-width="1.0" stroke-linejoin="round" />
<path d="M923.9,767.8 L936.7,771.7 L932.2,782.2 L926.7,791.1 L916.7,782.2 L913.9,780.6 Z" fill="#c4c7ca" stroke="#0d0d0d" stroke-width="1.0" stroke-linejoin="round" />
<ellipse cx="923.9" cy="791.1" rx="11.0" ry="16.0" transform="rotate(-20.0 923.9 791.1)" fill="#b5b5b5" stroke="#0d0d0d" stroke-width="0.8" />
<ellipse cx="925.0" cy="792.2" rx="8.0" ry="12.6" transform="rotate(-20.0 925.0 792.2)" fill="#6a6a6a" stroke="#0d0d0d" stroke-width="0.8" />
<ellipse cx="926.7" cy="793.3" rx="5.5" ry="9.0" transform="rotate(-20.0 926.7 793.3)" fill="#222" stroke="#0d0d0d" stroke-width="0.8" />
<path d="M936.7,771.1 C940.0,769.3 945.4,770.0 950.0,771.1 C954.6,772.2 960.2,774.3 964.4,777.8 C968.7,781.3 973.1,787.2 975.6,792.2 C978.1,797.2 980.9,802.4 979.4,807.8 C978.0,813.1 971.0,821.9 966.7,824.4 C962.3,827.0 958.0,824.8 953.3,823.3 C948.7,821.9 942.6,819.4 938.9,815.6 C935.2,811.7 932.6,805.6 931.1,800.0 C929.6,794.4 929.1,787.0 930.0,782.2 C930.9,777.4 933.3,773.0 936.7,771.1 Z" fill="#1d1d1d" stroke="#0d0d0d" stroke-width="1.0" stroke-linejoin="round" />
<ellipse cx="951.7" cy="797.8" rx="7.2" ry="7.6" transform="rotate(0.0 951.7 797.8)" fill="url(#gBoltHole)" stroke="#0a0a0a" stroke-width="0.8" />
<path d="M933.3,441.7 L953.3,447.8 L964.4,467.8 L956.1,480.6 L944.4,491.7 L927.8,486.7 L913.9,464.5 L923.9,450.0 Z" fill="#c9ccd0" stroke="#0d0d0d" stroke-width="1.0" stroke-linejoin="round" /><path d="M933.3,441.7 L953.3,447.8 L946.1,456.7 L926.1,451.1 Z" fill="#d6dadd" stroke="#0d0d0d" stroke-width="1.0" stroke-linejoin="round" /><path d="M953.3,447.8 L964.4,467.8 L956.1,480.6 L946.1,456.7 Z" fill="#f3f3f3" stroke="#0d0d0d" stroke-width="1.0" stroke-linejoin="round" /><path d="M956.1,480.6 L944.4,491.7 L942.2,486.7 L948.9,474.5 Z" fill="#bfc2c5" stroke="#0d0d0d" stroke-width="1.0" stroke-linejoin="round" /><ellipse cx="931.6" cy="470.6" rx="17.2" ry="18.8" transform="rotate(-20.0 931.6 470.6)" fill="#dedede" stroke="#0d0d0d" stroke-width="1.0" /><ellipse cx="931.3" cy="471.2" rx="14.4" ry="15.8" transform="rotate(-20.0 931.3 471.2)" fill="#c2c2c2" stroke="#0d0d0d" stroke-width="0.8" /><ellipse cx="931.0" cy="471.8" rx="12.0" ry="13.2" transform="rotate(-20.0 931.0 471.8)" fill="#9a9a9a" stroke="#0d0d0d" stroke-width="0.8" /><ellipse cx="930.8" cy="472.2" rx="9.8" ry="10.8" transform="rotate(-20.0 930.8 472.2)" fill="#555" stroke="#0d0d0d" stroke-width="0.8" /><ellipse cx="930.7" cy="472.4" rx="7.8" ry="8.6" transform="rotate(-20.0 930.7 472.4)" fill="#181818" stroke="#0d0d0d" stroke-width="0.8" />
<path d="M1251.7,532.9 L1271.7,539.0 L1282.8,559.0 L1274.5,571.8 L1262.8,582.9 L1246.2,577.9 L1232.3,555.7 L1242.3,541.2 Z" fill="#c9ccd0" stroke="#0d0d0d" stroke-width="1.0" stroke-linejoin="round" /><path d="M1251.7,532.9 L1271.7,539.0 L1264.5,547.9 L1244.5,542.3 Z" fill="#d6dadd" stroke="#0d0d0d" stroke-width="1.0" stroke-linejoin="round" /><path d="M1271.7,539.0 L1282.8,559.0 L1274.5,571.8 L1264.5,547.9 Z" fill="#f3f3f3" stroke="#0d0d0d" stroke-width="1.0" stroke-linejoin="round" /><path d="M1274.5,571.8 L1262.8,582.9 L1260.6,577.9 L1267.3,565.7 Z" fill="#bfc2c5" stroke="#0d0d0d" stroke-width="1.0" stroke-linejoin="round" /><ellipse cx="1250.0" cy="561.8" rx="17.2" ry="18.8" transform="rotate(-20.0 1250.0 561.8)" fill="#dedede" stroke="#0d0d0d" stroke-width="1.0" /><ellipse cx="1249.7" cy="562.4" rx="14.4" ry="15.8" transform="rotate(-20.0 1249.7 562.4)" fill="#c2c2c2" stroke="#0d0d0d" stroke-width="0.8" /><ellipse cx="1249.4" cy="563.0" rx="12.0" ry="13.2" transform="rotate(-20.0 1249.4 563.0)" fill="#9a9a9a" stroke="#0d0d0d" stroke-width="0.8" /><ellipse cx="1249.2" cy="563.4" rx="9.8" ry="10.8" transform="rotate(-20.0 1249.2 563.4)" fill="#555" stroke="#0d0d0d" stroke-width="0.8" /><ellipse cx="1249.1" cy="563.6" rx="7.8" ry="8.6" transform="rotate(-20.0 1249.1 563.6)" fill="#181818" stroke="#0d0d0d" stroke-width="0.8" />
<path d="M1251.1,851.1 L1271.1,857.2 L1282.2,877.2 L1273.9,890.0 L1262.2,901.1 L1245.6,896.1 L1231.7,873.9 L1241.7,859.4 Z" fill="#c9ccd0" stroke="#0d0d0d" stroke-width="1.0" stroke-linejoin="round" /><path d="M1251.1,851.1 L1271.1,857.2 L1263.9,866.1 L1243.9,860.5 Z" fill="#d6dadd" stroke="#0d0d0d" stroke-width="1.0" stroke-linejoin="round" /><path d="M1271.1,857.2 L1282.2,877.2 L1273.9,890.0 L1263.9,866.1 Z" fill="#f3f3f3" stroke="#0d0d0d" stroke-width="1.0" stroke-linejoin="round" /><path d="M1273.9,890.0 L1262.2,901.1 L1260.0,896.1 L1266.7,883.9 Z" fill="#bfc2c5" stroke="#0d0d0d" stroke-width="1.0" stroke-linejoin="round" /><ellipse cx="1249.4" cy="880.0" rx="17.2" ry="18.8" transform="rotate(-20.0 1249.4 880.0)" fill="#dedede" stroke="#0d0d0d" stroke-width="1.0" /><ellipse cx="1249.1" cy="880.6" rx="14.4" ry="15.8" transform="rotate(-20.0 1249.1 880.6)" fill="#c2c2c2" stroke="#0d0d0d" stroke-width="0.8" /><ellipse cx="1248.8" cy="881.2" rx="12.0" ry="13.2" transform="rotate(-20.0 1248.8 881.2)" fill="#9a9a9a" stroke="#0d0d0d" stroke-width="0.8" /><ellipse cx="1248.6" cy="881.6" rx="9.8" ry="10.8" transform="rotate(-20.0 1248.6 881.6)" fill="#555" stroke="#0d0d0d" stroke-width="0.8" /><ellipse cx="1248.5" cy="881.8" rx="7.8" ry="8.6" transform="rotate(-20.0 1248.5 881.8)" fill="#181818" stroke="#0d0d0d" stroke-width="0.8" />
<path d="M1822.6,100.5 L1837.5,100.5 L1830.0,91.0 Z" fill="#9b9b9b"/>
<path d="M1822.6,231.0 L1837.5,231.0 L1830.0,240.5 Z" fill="#9b9b9b"/>
<path d="M1764.9,158.7 L1764.9,172.8 L1754.9,165.7 Z" fill="#9b9b9b"/>
<path d="M1895.0,158.7 L1895.0,172.8 L1904.9,165.7 Z" fill="#9b9b9b"/>
<path d="M1808.9,102.0 Q1791.9,107.5 1783.3,118.5" fill="none" stroke="#9b9b9b" stroke-width="4.2"/>
<path d="M1775.9,125.3 L1777.4,113.0 L1789.1,122.8 Z" fill="#9b9b9b"/>
<path d="M1851.2,102.0 Q1868.2,107.5 1876.9,118.5" fill="none" stroke="#9b9b9b" stroke-width="4.2"/>
<path d="M1884.0,125.3 L1882.4,113.0 L1870.9,122.8 Z" fill="#9b9b9b"/>
<path d="M1828.1,124.8 L1868.2,142.1 L1865.9,185.4 L1836.0,205.9 L1795.1,190.1 L1794.3,143.7 Z" fill="#e3e8eb" stroke="#e3e8eb" stroke-width="5" stroke-linejoin="round" opacity=".92"/>
<path d="M1807.7,142.9 L1828.1,131.9 L1854.9,142.1 L1836.3,151.6 Z" fill="#fdfdfd" stroke="#fdfdfd" stroke-width="4" stroke-linejoin="round"/>
<path d="M1800.6,159.5 L1831.3,165.0 L1831.3,197.2 L1800.6,186.2 Z" fill="#fdfdfd" stroke="#fdfdfd" stroke-width="4" stroke-linejoin="round"/>
<path d="M1843.8,165.7 L1864.3,149.2 L1862.7,180.7 L1843.1,194.9 Z" fill="#fdfdfd" stroke="#fdfdfd" stroke-width="4" stroke-linejoin="round"/>
<path d="M1836.3,153.9 L1836.3,205.9 M1836.3,153.9 L1794.3,143.7 M1836.3,153.9 L1868.2,142.1" stroke="#e3e8eb" stroke-width="3.4" fill="none"/>
<circle cx="1799.0" cy="148.4" r="3" fill="#fbfbfb"/>
<circle cx="1836.8" cy="158.7" r="3" fill="#fbfbfb"/>
<circle cx="1865.9" cy="146.1" r="3" fill="#fbfbfb"/>
<path d="M1788.5,197.7 L1809.2,180.7" stroke="#49b749" stroke-width="1"/>
<path d="M1809.2,180.7 L1822.6,170.5" stroke="#b9dcb9" stroke-width="1"/>
<path d="M1820.2,151.6 V161.8" stroke="#dfe9df" stroke-width="1"/>
<path d="M1788.5,147.7 V197.7" stroke="#3c3cd0" stroke-width="1.2"/>
<path d="M1788.5,197.7 L1839.4,212.5" stroke="#e04a4a" stroke-width="1.2"/>
<text x="1784.5" y="141.8" font-family="Liberation Sans, sans-serif" font-size="11.5" fill="#5656d8" textLength="6.6" lengthAdjust="spacingAndGlyphs">Z</text>
<text x="1844.3" y="218.5" font-family="Liberation Sans, sans-serif" font-size="11.5" fill="#e0526a" textLength="7" lengthAdjust="spacingAndGlyphs">X</text>
<text x="1819.1" y="171.3" font-family="Liberation Sans, sans-serif" font-size="10.5" fill="#b4d8b4" textLength="6.6" lengthAdjust="spacingAndGlyphs">Y</text>
<text transform="translate(1830.5,140.6) rotate(24) skewX(-28) scale(1,.8)" text-anchor="middle" font-family="Liberation Sans, sans-serif" font-size="9.6" fill="#222">Top</text>
<text transform="translate(1814.3,182.0) rotate(13)" text-anchor="middle" font-family="Liberation Sans, sans-serif" font-size="10.6" fill="#1c1c1c" textLength="25" lengthAdjust="spacingAndGlyphs">Front</text>
<text transform="translate(1857.2,174.4) rotate(-58) skewX(-14)" text-anchor="middle" font-family="Liberation Sans, sans-serif" font-size="9" fill="#222" textLength="17" lengthAdjust="spacingAndGlyphs">Right</text>
<path d="M1866.7,226.3 L1875.3,223.2 L1884.0,226.3 L1884.0,236.5 L1875.3,240.5 L1866.7,236.5 Z" fill="#e9e9e9" stroke="#333" stroke-width="1.1" stroke-linejoin="round"/>
<path d="M1866.7,226.3 L1875.3,230.3 L1875.3,240.5 L1866.7,236.5 Z" fill="#a9a9a9" stroke="#333" stroke-width=".9" stroke-linejoin="round"/>
<path d="M1866.7,226.3 L1875.3,223.2 L1884.0,226.3 L1875.3,230.3 Z" fill="#f8f8f8" stroke="#333" stroke-width=".9" stroke-linejoin="round"/>
<path d="M1891.8,230.3 L1899.7,230.3 L1895.8,234.5 Z" fill="#222"/>
<rect x="1888.5" y="400.5" width="40" height="198" fill="#fff" stroke="#b9b9b9" stroke-width="1"/>
<path d="M1888.5,433.5 H1920" stroke="#b9b9b9" stroke-width="1"/>
<path d="M1888.5,466.5 H1920" stroke="#b9b9b9" stroke-width="1"/>
<path d="M1888.5,499.5 H1920" stroke="#b9b9b9" stroke-width="1"/>
<path d="M1888.5,532.5 H1920" stroke="#b9b9b9" stroke-width="1"/>
<path d="M1888.5,565.5 H1920" stroke="#b9b9b9" stroke-width="1"/>
<rect x="1888.5" y="609.5" width="40" height="99" fill="#fff" stroke="#b9b9b9" stroke-width="1"/>
<path d="M1888.5,642.5 H1920" stroke="#b9b9b9" stroke-width="1"/>
<path d="M1888.5,675.5 H1920" stroke="#b9b9b9" stroke-width="1"/>
<rect x="1896.6" y="409.8" width="16.8" height="16.6" rx="3" fill="#fff" stroke="#222" stroke-width="1.5"/>
<path d="M1899.6,413.6 H1910.4 M1901.8,416.6 H1910.4 M1901.8,419.6 H1910.4 M1901.8,422.6 H1910.4" stroke="#222" stroke-width="1.5"/>
<path d="M1899.8,448 L1906.6,444.2 L1913.6,448 V455.8 L1906.6,459.6 L1899.8,455.8 Z M1899.8,448 L1906.6,451.6 L1913.6,448 M1906.6,451.6 V459.6" fill="#fff" stroke="#222" stroke-width="1.2" stroke-linejoin="round"/>
<rect x="1895" y="441.2" width="9.2" height="8" fill="#2f6fc6"/><path d="M1898.1,441.2 v8 M1901.2,441.2 v8 M1895,443.8 h9.2 M1895,446.4 h9.2" stroke="#9cc3f3" stroke-width=".8"/>
<rect x="1896.4" y="475.8" width="5.2" height="5.2" fill="#9a9a9a" stroke="#555" stroke-width=".9"/>
<path d="M1898.8,482.6 V485 H1903.4" fill="none" stroke="#1e5fb3" stroke-width="1.2" stroke-dasharray="1.6 1.2"/>
<path d="M1908.2,481.6 H1912.2 L1913.6,483 V492.8 H1904 L1902.6,491.4 V488 H1908.2 Z M1909.6,483 H1913.6 M1909.6,483 V489.4 H1904 V492.8 M1908.2,481.6 L1909.6,483 M1902.6,488 L1904,489.4" fill="#e8e8e8" stroke="#444" stroke-width="1" stroke-linejoin="round"/>
<rect x="1896.4" y="518.4" width="17" height="7.4" fill="#fff" stroke="#222" stroke-width="1.3"/>
<rect x="1906.4" y="508.6" width="7" height="13" fill="none" stroke="#1e5fb3" stroke-width="1.2" stroke-dasharray="2 1.3"/>
<circle cx="1910" cy="522.2" r="2.6" fill="#cfd6e2" stroke="#2b4f86" stroke-width="1"/>
<path d="M1904.8,540.8 L1912.6,546.6 L1911.4,555.4 L1904.8,558.2 L1897.4,554.2 L1897.8,546.2 Z" fill="#2566c2"/>
<path d="M1904.8,540.8 L1912.6,546.6 L1905.6,549.4 Z" fill="#cfd5dc"/><path d="M1904.8,540.8 L1897.8,546.2 L1905.6,549.4 Z" fill="#8fc4f2"/>
<path d="M1912.6,546.6 L1911.4,555.4 L1905.6,549.4 Z" fill="#9aa0a6"/><path d="M1911.4,555.4 L1904.8,558.2 L1905.6,549.4 Z" fill="#c4c9cf"/>
<path d="M1897.8,546.2 L1897.4,554.2 L1905.6,549.4 Z" fill="#1c4fa0"/>
<path d="M1904.8,540.8 L1905.6,549.4 L1912.6,546.6 M1905.6,549.4 L1911.4,555.4 M1905.6,549.4 L1904.8,558.2 M1905.6,549.4 L1897.4,554.2 M1905.6,549.4 L1897.8,546.2" stroke="#fff" stroke-width=".8" fill="none"/>
<rect x="1895.4" y="574" width="8.6" height="8.2" fill="#fff" stroke="#222" stroke-width="1.2"/><path d="M1898.3,574 v8.2 M1901.2,574 v8.2 M1895.4,576.7 h8.6 M1895.4,579.4 h8.6" stroke="#222" stroke-width="1"/>
<text x="1894.6" y="590.6" font-family="Liberation Serif, serif" font-size="17" fill="#222" textLength="5" lengthAdjust="spacingAndGlyphs">(</text>
<text x="1899.4" y="589.6" font-family="Liberation Serif, serif" font-size="17" font-style="italic" font-weight="700" fill="#222" textLength="10" lengthAdjust="spacingAndGlyphs">x</text>
<text x="1909.6" y="590.6" font-family="Liberation Serif, serif" font-size="17" fill="#222" textLength="5" lengthAdjust="spacingAndGlyphs">)</text>
<rect x="1893.8" y="614.6" width="22.6" height="22" rx="3" fill="#d4d4d4"/>
<path d="M1896.2,622.4 L1913.4,621.4 L1914.4,632.6 L1897,634.2 Z" fill="#2f2f2f"/>
<circle cx="1901.6" cy="627" r="2.9" fill="#fff" stroke="#2c5fb0" stroke-width="1.1"/><circle cx="1909.2" cy="626.4" r="2.9" fill="#fff" stroke="#2c5fb0" stroke-width="1.1"/>
<circle cx="1902.2" cy="627.2" r="1.2" fill="#2c5fb0"/><circle cx="1909.8" cy="626.6" r="1.2" fill="#2c5fb0"/>
<path d="M1904.4,631.4 q2,1.4 4,0" stroke="#fff" stroke-width=".9" fill="none"/>
<path d="M1900.2,619.8 v-2.4 M1904.8,620.2 v-3.4 M1909.6,619.6 v-2.4" stroke="#4a6fc0" stroke-width="1.1"/><circle cx="1904.8" cy="616.6" r="1" fill="#333"/>
<rect x="1893.8" y="647.8" width="22.6" height="22" rx="2.5" fill="#58b558" stroke="#a8d8a8" stroke-width="1.2"/>
<path d="M1897.6,652.6 Q1901.4,651.4 1904.4,653 V666 Q1901.4,664.4 1897.6,665.4 Z M1912.4,652.6 Q1908.6,651.4 1905.6,653 V666 Q1908.6,664.4 1912.4,665.4 Z" fill="#fff"/>
<rect x="1894.4" y="680.8" width="21.6" height="22" fill="#1b57c6" stroke="#111" stroke-width="1.4"/>
<path d="M1897.8,685.6 Q1901.4,684.4 1904.4,686 V699 Q1901.4,697.4 1897.8,698.4 Z M1912.4,685.6 Q1908.8,684.4 1905.8,686 V699 Q1908.8,697.4 1912.4,698.4 Z" fill="#fff"/>
<path d="M1822.3,1036.8 L1827.4,1036.8 L1827.4,1034.1 L1831.0,1030.8 L1835.4,1030.4 L1838.0,1032.6 L1838.0,1039.2 L1836.1,1041.4 L1822.3,1041.4 Z" fill="#fff" stroke="#1c1c1c" stroke-width="1.1" stroke-linejoin="round"/>
<ellipse cx="1832.6" cy="1033.5" rx="5" ry="2.6" fill="#fff" stroke="#1c1c1c" stroke-width="1.1"/><ellipse cx="1832.6" cy="1033.7" rx="2.4" ry="1.1" fill="none" stroke="#1c1c1c" stroke-width=".8"/>
<path d="M1822.3,1036.8 H1834.0 Q1837.6,1036.3 1838.0,1034.1" fill="none" stroke="#1c1c1c" stroke-width="1.1"/>
<path d="M1825.2,1039.5 v1.8" stroke="#1c1c1c" stroke-width=".7"/>
<path d="M1828.1,1039.5 v1.8" stroke="#1c1c1c" stroke-width=".7"/>
<path d="M1831.0,1039.5 v1.8" stroke="#1c1c1c" stroke-width=".7"/>
<path d="M1834.0,1039.5 v1.8" stroke="#1c1c1c" stroke-width=".7"/>
<path d="M1855.3,1042.4 A9.8,12.4 0 0 1 1874.8,1042.4 Z" fill="#fff" stroke="#1c1c1c" stroke-width="1.2"/>
<path d="M1857.1,1041.0 A7.9,9.1 0 0 1 1872.9,1041.0" fill="none" stroke="#777" stroke-width=".8" stroke-dasharray=".8 1"/>
<path d="M1859.1,1041.0 L1860.2,1037.0 L1865.0,1034.4 L1869.8,1037.0 L1870.9,1041.0 L1867.5,1041.0 L1866.4,1038.6 L1863.7,1038.6 L1862.5,1041.0 Z" fill="#fff" stroke="#1c1c1c" stroke-width="1.1" stroke-linejoin="round"/>
<path d="M1892.9,1041.9 H1907.0" stroke="#1c1c1c" stroke-width="1.9"/>
<path d="M1894.8,1029.5 H1905.1" stroke="#1c1c1c" stroke-width="1.3"/>
<path d="M1900.0,1029.5 V1041.4" stroke="#555" stroke-width="1.6"/>
<path d="M1895.4,1029.5 L1893.4,1037.6 M1895.4,1029.5 L1897.5,1037.6" stroke="#1c1c1c" stroke-width="1"/>
<path d="M1893.0,1038.0 H1897.9" stroke="#1c1c1c" stroke-width="1.8"/>
<path d="M1904.5,1029.5 L1902.5,1037.6 M1904.5,1029.5 L1906.6,1037.6" stroke="#1c1c1c" stroke-width="1"/>
<path d="M1902.1,1038.0 H1907.0" stroke="#1c1c1c" stroke-width="1.8"/></svg>
<div id="topbar"></div>
<span class="t" style="left:30.79px;top:9.31px;font-size:18.3px;color:#6b6b6b;transform:scaleX(0.9825);-webkit-text-stroke:0px currentColor">onshape</span>
<span class="t" style="left:140.22px;top:10.78px;font-size:21.4px;color:#2f2f2f;transform:scaleX(1.0000);font-weight:700;-webkit-text-stroke:0.1px currentColor">1B - Practice Exercise Solutions</span>
<span class="t" style="left:474.18px;top:16.20px;font-size:15px;color:#9a9a9a;transform:scaleX(1.0324)">FRCDesignLib Rework</span>
<span class="t" style="left:691.42px;top:13.96px;font-size:16px;color:#9a9a9a;transform:scaleX(0.9663)">Stage 1</span>
<span class="t" style="left:875.00px;top:13.63px;font-size:14.5px;color:#333;transform:scaleX(0.9524)">215</span>
<span class="t" style="left:936.50px;top:13.63px;font-size:14.5px;color:#333;transform:scaleX(0.9871)">5014</span>
<span class="t" style="left:1006.80px;top:13.63px;font-size:14.5px;color:#333;transform:scaleX(1.1203)">4</span>
<span class="t" style="left:1514.18px;top:12.46px;font-size:18.6px;color:#666;transform:scaleX(1.2961);-webkit-text-stroke:0.1px currentColor">{</span>
<span class="t" style="left:1527.78px;top:12.46px;font-size:18.6px;color:#666;transform:scaleX(1.2961);-webkit-text-stroke:0.1px currentColor">}</span>
<div class="abs top" style="left:1557.3px;top:5.9px;width:15.8px;height:15.6px;border-radius:2px;background:#1b5bb5"></div>
<span class="t" style="left:1558.42px;top:8.71px;font-size:10.5px;color:#fff;transform:scaleX(1.1557);font-weight:700">9+</span>
<div class="abs" style="left:1673.2px;top:2.9px;width:58.8px;height:32.9px;border-radius:4.5px;background:#1a56b3"></div>
<span class="t" style="left:1684.77px;top:12.10px;font-size:15px;color:#fff;transform:scaleX(0.8656);font-weight:700;-webkit-text-stroke:0px currentColor">Share</span>
<span class="t" style="left:1746.83px;top:14.55px;font-size:14px;color:#fafafa;transform:scaleX(1.1912);font-weight:700">?</span>
<span class="t" style="left:1817.77px;top:13.05px;font-size:15px;color:#333;transform:scaleX(0.9355)">Andrew Card</span>
<svg class="i" style="left:0;top:0" width="1920" height="40" viewBox="0 0 1920 40"><path d="M5,14.2 L14.2,9.2 L17.1,11 L8.4,16.2 V21 L5,19.4 Z" fill="#5ab548"/><path d="M16.7,13.3 L19.4,11.9 L23.9,14.4 V24.4 L20,26.9 V15.8 Z" fill="#5ab548"/><path d="M5,21.1 L14.4,26.4 L18.3,24.2 L18.6,28 L14.4,30.6 L5,25 Z" fill="#5ab548"/><path d="M10.4,19.6 V18 L14.4,15.6 M16.6,16.6 L18.3,18 V22.3 M10.4,21.5 L14.2,24.1 L15.9,23" fill="none" stroke="#474747" stroke-width="1.25" stroke-linecap="round" stroke-linejoin="round"/><path d="M113,15.3 H129 M113,21.4 H129 M113,27.5 H129" stroke="#2a2a2a" stroke-width="2.7"/><g transform="translate(652,22) rotate(-45)" fill="none" stroke="#333" stroke-width="1.9"><rect x="-8.4" y="-3" width="9.4" height="6" rx="3"/><rect x="-1" y="-3" width="9.4" height="6" rx="3"/></g><path d="M669.7,15.7 H676 L677.8,18 H686.4 V27.6 H669.7 Z" fill="none" stroke="#9a9a9a" stroke-width="1.3" stroke-linejoin="round"/><path d="M805.4,12.3 L813.3,16.7 L805.4,20.9 L797.5,16.8 Z" fill="#1c5db5"/><path d="M800.6,19.8 L805.4,22.4 L810.4,19.8 V24.8 L807.6,23.4 L805.4,25.4 L803.2,23.4 L800.6,24.8 Z" fill="#1c5db5"/><path d="M798.4,17 V24" stroke="#1c5db5" stroke-width="1.1"/><path d="M798.4,23 l1.3,3.7 h-2.6 z" fill="#1c5db5"/><circle cx="831" cy="19.5" r="8.3" fill="#fafafa" stroke="#333" stroke-width="1.6"/><path d="M826.5,13.2 q2.8,-1.6 5,-1.2 l0.6,2 l-2.2,1.2 l-0.4,2.2 l-2.8,0.6 l-1.6,-1.6 z M831.6,19.2 l3,-0.6 l2.8,2 l-0.8,3.2 l-2.4,3 l-1.4,-2.8 l-1.6,-1.6 z M835,13.4 l2.2,1.8 l-1.4,0.8 z" fill="#333"/><path d="M857.4,26 H852.1 V13.3 H863.2 V15.6 M855.4,13.3 V12.2 H860 V13.3" fill="none" stroke="#333" stroke-width="1.6" stroke-linejoin="round"/><path d="M858.2,15.4 H863.6 L866.9,18.7 V26.7 H858.2 Z M863.4,15.6 V19 H866.8" fill="#fafafa" stroke="#333" stroke-width="1.6" stroke-linejoin="round"/><rect x="920" y="11.5" width="1.8" height="1.6" fill="#111"/><rect x="920" y="14.4" width="1.8" height="1.6" fill="#111"/><rect x="920" y="24.1" width="1.8" height="1.6" fill="#111"/><rect x="920" y="27.0" width="1.8" height="1.6" fill="#111"/><circle cx="920.9" cy="19.9" r="3.2" fill="#2b2b2b"/><path d="M982.9,18.6 H987 V27.2 H982.9 Z M987,18.8 C989.4,17 990.6,14.6 991,11.6 C993.4,11 994.4,13.4 993,17.4 H998 C999.8,17.6 999.8,19.8 998.6,20.4 C999.6,21.2 999.4,22.8 998.2,23.2 C999,24.2 998.6,25.4 997.4,25.8 C997.8,26.8 997,27.4 996,27.4 H990 L987,26.4" fill="none" stroke="#333" stroke-width="1.6" stroke-linejoin="round"/><path d="M1521,21.8 L1524,25 L1529.6,18" fill="none" stroke="#595959" stroke-width="2"/><path d="M1549.4,27.6 C1552.4,25 1551,19 1553.6,16.6 C1555.6,14.4 1558.6,14.4 1560.6,16.6 C1563.2,19 1561.8,25 1564.8,27.6 Z" fill="#666"/><circle cx="1557.1" cy="28.8" r="2" fill="#666"/><rect x="1582.1" y="13.7" width="14.2" height="16.2" rx="1.6" fill="none" stroke="#595959" stroke-width="1.5"/><path d="M1589.6,18.2 H1594" stroke="#595959" stroke-width="1.7"/><path d="M1584.6,18.2 l1.2,1.2 l2.2,-2.6" fill="none" stroke="#595959" stroke-width="1"/><path d="M1589.6,22 H1594" stroke="#595959" stroke-width="1.7"/><path d="M1584.6,22 l1.2,1.2 l2.2,-2.6" fill="none" stroke="#595959" stroke-width="1"/><path d="M1589.6,25.8 H1594" stroke="#595959" stroke-width="1.7"/><path d="M1584.6,25.8 l1.2,1.2 l2.2,-2.6" fill="none" stroke="#595959" stroke-width="1"/><path d="M1613.4,15.1 h5 v5 h-5 z M1613.4,24.9 h5 v5 h-5 z M1623.2,24.9 h5.6 v5 h-5.6 z" fill="none" stroke="#595959" stroke-width="1.6"/><path d="M1622,17.4 H1630 M1626,13.4 V21.4" stroke="#595959" stroke-width="1.8"/><path d="M1648.8,31 V26.6 C1645.4,24 1644.6,19 1647,15.8 C1649.6,12.4 1655,12.2 1658,15 C1659.6,16.6 1660,18.6 1659.8,20.4 L1661.6,23.4 L1659.8,24.2 V27 C1659.8,28 1659,28.4 1658,28.4 H1656.4 V31 Z" fill="#595959"/><circle cx="1651.6" cy="20.4" r="2.2" fill="none" stroke="#fafafa" stroke-width="1.3" stroke-dasharray="1.1 .7"/><circle cx="1656" cy="16.8" r="1.5" fill="none" stroke="#fafafa" stroke-width="1" stroke-dasharray=".9 .6"/><circle cx="1752" cy="21.5" r="9" fill="#555"/><path d="M1769.6,20.2 h6.6 l-3.3,3.8 z" fill="#333"/><rect x="1788.8" y="10" width="24.2" height="23.8" rx="2" fill="#0a0a0a"/><polygon points="1800.90,12.70 1792.93,17.30 1792.93,26.50 1800.90,31.10 1808.87,26.50 1808.87,17.30" fill="none" stroke="#1fa6b8" stroke-width="1.7"/><path d="M1805.6,17.6 L1800.9,15 L1796,17.8 V20.6 L1805.8,23.6 V26.2 L1800.9,28.9 L1796.2,26.2" fill="none" stroke="#1fa6b8" stroke-width="1.9"/><path d="M1906,18.2 h7.6 l-3.8,4 z" fill="#333"/></svg>
<div id="toolbar"></div>
<span class="t" style="left:181.38px;top:51.05px;font-size:15px;color:#2f2f2f;transform:scaleX(0.9889)">Insert</span>
<div class="abs" style="left:1289.3px;top:42.2px;width:160px;height:31.6px;border-radius:4px;background:#ececec"></div>
<span class="t" style="left:1296.99px;top:50.46px;font-size:14.7px;color:#2f2f2f;transform:scaleX(0.9369)">Search tools...</span>
<div class="abs" style="left:1388.3px;top:49.5px;width:32.8px;height:18.2px;border:1px solid #a8a8a8;border-radius:2.5px;background:#f6f6f6"></div>
<div class="abs" style="left:1422.6px;top:49.5px;width:15.8px;height:18.2px;border:1px solid #a8a8a8;border-radius:2.5px;background:#f6f6f6"></div>
<span class="t" style="left:1390.97px;top:52.87px;font-size:11.5px;color:#333;transform:scaleX(1.1699);-webkit-text-stroke:0px currentColor">alt/</span>
<span class="t" style="left:1408.4px;top:53.8px;font-size:10px;color:#333;font-family:'DejaVu Sans',sans-serif;-webkit-text-stroke:0;transform:scaleX(.9)">⌥</span>
<span class="t" style="left:1426.74px;top:52.24px;font-size:12px;color:#333;transform:scaleX(1.2000);-webkit-text-stroke:0px currentColor">c</span>
<svg class="i" style="left:0;top:0" width="1920" height="80" viewBox="0 0 1920 80"><path d="M50.6,56.3 L56.4,50.6 V54.2 C61.4,54.4 63.6,58.6 63,64.4 C62,60.6 60.2,58.6 56.4,58.4 V62 Z" fill="#262626"/><path d="M98.8,56.3 L93,50.6 V54.2 C88,54.4 85.8,58.6 86.4,64.4 C87.4,60.6 89.2,58.6 93,58.4 V62 Z" fill="#9a9a9a"/><rect x="110.0" y="45.6" width="1.8" height="25" fill="#d2d2d2"/><rect x="147.9" y="45.6" width="1.8" height="25" fill="#d2d2d2"/><rect x="230.0" y="45.6" width="1.8" height="25" fill="#d2d2d2"/><rect x="267.9" y="45.6" width="1.8" height="25" fill="#d2d2d2"/><rect x="544.1" y="45.6" width="1.8" height="25" fill="#d2d2d2"/><rect x="616.0" y="45.6" width="1.8" height="25" fill="#d2d2d2"/><rect x="892.2" y="45.6" width="1.8" height="25" fill="#d2d2d2"/><rect x="1032.0" y="45.6" width="1.8" height="25" fill="#d2d2d2"/><rect x="1104.1" y="45.6" width="1.8" height="25" fill="#d2d2d2"/><circle cx="130" cy="57.5" r="10" fill="#b9c7df"/><path d="M133.4,64 A7,7 0 1 1 136.6,60" fill="none" stroke="#dfe6f3" stroke-width="2"/><path d="M135.8,66.4 l-4.4,-0.6 l3.4,-3.4 z" fill="#dfe6f3"/><path d="M161.3,54.4 L163.2,52.6 H167.6 M161.3,54.4 V63.6 L163.6,65.8 H174.4 V56.6 L172.4,54.6 M163.6,65.8 V56.6 H174.4 M163.6,56.6 L161.3,54.4" fill="none" stroke="#2b2b2b" stroke-width="1.2" stroke-linejoin="round"/><path d="M164.4,50.4 C168,49.6 169.8,52 169.6,55.6" fill="none" stroke="#2b2b2b" stroke-width="1.5"/><path d="M166.6,55.4 h6 l-3,3.6 z" fill="#2b2b2b"/><circle cx="250" cy="57.9" r="9" fill="none" stroke="#2b2b2b" stroke-width="1"/><circle cx="250" cy="57.9" r="7.3" fill="none" stroke="#2b2b2b" stroke-width="1.1"/><path d="M250,51.6 V57.9 H256.4" fill="none" stroke="#2b2b2b" stroke-width="1.3"/><path d="M280.9,52.6 V62.8 a7,3 0 0 0 14,0 V52.6" fill="#fff" stroke="#555" stroke-width="1"/><ellipse cx="287.9" cy="52.6" rx="7" ry="3" fill="#fff" stroke="#555" stroke-width="1"/><path d="M280.9,57.6 L283.6,58.8 V61.4 Q287.9,63.4 292.2,61.4 V58.8 L294.9,57.6 V62.8 a7,3 0 0 1 -14,0 Z" fill="#8c8c8c" stroke="#555" stroke-width=".8"/><path d="M315.2,52.6 V62.8 a6.8,3 0 0 0 13.6,0 V52.6" fill="#fff" stroke="#7d7d7d" stroke-width="1"/><ellipse cx="322" cy="52.6" rx="6.8" ry="3" fill="#fff" stroke="#7d7d7d" stroke-width="1"/><path d="M315.2,55.4 a6.8,3 0 0 0 13.6,0" fill="none" stroke="#7d7d7d" stroke-width="1"/><path d="M316,54.6 C311.6,56 311.8,58.6 315.6,59.6 M328,54.6 C332.4,56 332.2,58.6 328.4,59.6" fill="none" stroke="#2b2b2b" stroke-width="1.7"/><path d="M319.2,60.2 l-4,1.6 l0.6,-4.2 z M324.8,60.2 l4,1.6 l-0.6,-4.2 z" fill="#2b2b2b"/><path d="M350.0,54.4 V63.6 a6.2,3 0 0 0 12.4,0 V54.4" fill="#fff" stroke="#7d7d7d" stroke-width="1"/><ellipse cx="356.2" cy="54.4" rx="6.2" ry="3" fill="#fff" stroke="#7d7d7d" stroke-width="1"/><path d="M346.5,54 V63.8 M365.3,54 V63.8" stroke="#2b2b2b" stroke-width="2.2"/><path d="M355.90,55.60 L355.90,51.40" stroke="#2b2b2b" stroke-width="1.7" fill="none"/><path d="M355.90,48.40 L358.50,51.40 L353.30,51.40 Z" fill="#2b2b2b"/><rect x="382.4" y="50.4" width="15.3" height="15.6" fill="none" stroke="#7d7d7d" stroke-width="1"/><path d="M390.00,58.10 L394.80,58.10" stroke="#2b2b2b" stroke-width="1.8" fill="none"/><path d="M397.80,58.10 L394.80,60.70 L394.80,55.50 Z" fill="#2b2b2b"/><path d="M390.00,58.10 L385.20,58.10" stroke="#2b2b2b" stroke-width="1.8" fill="none"/><path d="M382.20,58.10 L385.20,55.50 L385.20,60.70 Z" fill="#2b2b2b"/><path d="M390.00,58.10 L390.00,62.90" stroke="#2b2b2b" stroke-width="1.8" fill="none"/><path d="M390.00,65.90 L387.40,62.90 L392.60,62.90 Z" fill="#2b2b2b"/><path d="M390.00,58.10 L390.00,53.30" stroke="#2b2b2b" stroke-width="1.8" fill="none"/><path d="M390.00,50.30 L392.60,53.30 L387.40,53.30 Z" fill="#2b2b2b"/><path d="M417.6,53.6 V62.8 a6.4,2.8 0 0 0 12.8,0 V53.6" fill="#fff" stroke="#7d7d7d" stroke-width="1"/><ellipse cx="424" cy="53.6" rx="6.4" ry="2.8" fill="#fff" stroke="#7d7d7d" stroke-width="1"/><path d="M418,55 C413.6,56.4 413.8,59 417.6,60 M430,55 C434.4,56.4 434.2,59 430.4,60" fill="none" stroke="#2b2b2b" stroke-width="1.7"/><path d="M421.2,60.6 l-4,1.6 l0.6,-4.2 z M426.8,60.6 l4,1.6 l-0.6,-4.2 z" fill="#2b2b2b"/><path d="M424.00,54.60 L424.00,51.40" stroke="#2b2b2b" stroke-width="1.7" fill="none"/><path d="M424.00,48.40 L426.60,51.40 L421.40,51.40 Z" fill="#2b2b2b"/><path d="M451.6,62.2 H455 M461,62.2 H464.4 a1.6,1.6 0 0 1 0,3.6 H451.6 a1.6,1.6 0 0 1 0,-3.6" fill="none" stroke="#7d7d7d" stroke-width="1"/><path d="M455,52 V62.6 a3,1.5 0 0 0 6,0 V52" fill="#fff" stroke="#7d7d7d" stroke-width="1"/><ellipse cx="458" cy="52" rx="3" ry="1.5" fill="#fff" stroke="#7d7d7d" stroke-width="1"/><path d="M455.00,57.00 L452.60,57.00" stroke="#2b2b2b" stroke-width="1.7" fill="none"/><path d="M449.60,57.00 L452.60,54.40 L452.60,59.60 Z" fill="#2b2b2b"/><path d="M461.00,57.00 L463.60,57.00" stroke="#2b2b2b" stroke-width="1.7" fill="none"/><path d="M466.60,57.00 L463.60,59.60 L463.60,54.40 Z" fill="#2b2b2b"/><circle cx="491.9" cy="58.1" r="7.4" fill="none" stroke="#7d7d7d" stroke-width="1"/><path d="M484.6,58.1 H499.2 M491.9,50.8 C494,55 494,61 491.9,65.4" fill="none" stroke="#2b2b2b" stroke-width="1.8"/><path d="M482.6,58.1 l3.4,-2.6 v5.2 z M501.2,58.1 l-3.4,-2.6 v5.2 z M491.9,48.6 l2.8,3.2 h-5.4 z M491.9,67.6 l2.8,-3.2 h-5.4 z" fill="#2b2b2b"/><path d="M517.4,54.8 L522.6,49.4 V60.4 L517.4,66.2 Z M529.6,54.8 L534.8,49.4 V60.4 L529.6,66.2 Z" fill="none" stroke="#8a8a8a" stroke-width="1"/><path d="M526.00,58.20 L524.00,58.20" stroke="#2b2b2b" stroke-width="1.7" fill="none"/><path d="M521.20,58.20 L524.00,55.80 L524.00,60.60 Z" fill="#2b2b2b"/><path d="M526.00,58.20 L528.40,58.20" stroke="#2b2b2b" stroke-width="1.7" fill="none"/><path d="M531.20,58.20 L528.40,60.60 L528.40,55.80 Z" fill="#2b2b2b"/><circle cx="566.4" cy="56" r="5.6" fill="none" stroke="#7d7d7d" stroke-width="1"/><path d="M555.8,58.6 C561,58.6 563.8,62 564.6,66.4" fill="none" stroke="#7d7d7d" stroke-width="1"/><path d="M558,52 C564,53 569,58 570.6,64" fill="none" stroke="#2b2b2b" stroke-width="1.7"/><path d="M556,50.4 l4.6,0.2 l-2.2,3.8 z M571.4,66.6 l-3,-3.4 l4.4,-0.8 z" fill="#2b2b2b"/><path d="M588.8,50.2 V65.8 M607.3,50.2 V65.8" stroke="#2b2b2b" stroke-width="2.2"/><rect x="592.4" y="52.6" width="11.4" height="11" fill="#eee" stroke="#8a8a8a" stroke-width="1"/><path d="M592.4,55 H603.8 M592.4,61.4 H603.8" stroke="#8a8a8a" stroke-width=".8"/><path d="M591.40,58.40 L594.80,58.40" stroke="#2b2b2b" stroke-width="1.5" fill="none"/><path d="M597.40,58.40 L594.80,60.60 L594.80,56.20 Z" fill="#2b2b2b"/><path d="M604.80,58.40 L601.40,58.40" stroke="#2b2b2b" stroke-width="1.5" fill="none"/><path d="M598.80,58.40 L601.40,56.20 L601.40,60.60 Z" fill="#2b2b2b"/><rect x="628.8" y="50.9" width="14.4" height="14.6" fill="none" stroke="#2b2b2b" stroke-width="1.3" stroke-dasharray="3 1.6"/><rect x="627.5" y="49.6" width="2.6" height="2.6" fill="#fff" stroke="#2b2b2b" stroke-width="1"/><rect x="641.9000000000001" y="49.6" width="2.6" height="2.6" fill="#fff" stroke="#2b2b2b" stroke-width="1"/><rect x="627.5" y="64.2" width="2.6" height="2.6" fill="#fff" stroke="#2b2b2b" stroke-width="1"/><rect x="641.9000000000001" y="64.2" width="2.6" height="2.6" fill="#fff" stroke="#2b2b2b" stroke-width="1"/><rect x="631.8" y="53.8" width="6.4" height="6.4" fill="#fff" stroke="#2b2b2b" stroke-width="1.1"/><rect x="635" y="57" width="6.2" height="6.2" fill="none" stroke="#2b2b2b" stroke-width="1.1"/><path d="M665.4000000000001,53 V63.2 a6.8,2.8 0 0 0 13.6,0 V53" fill="#fff" stroke="#333" stroke-width="1.3"/><ellipse cx="672.2" cy="53" rx="6.8" ry="2.8" fill="#fff" stroke="#333" stroke-width="1.3"/><path d="M668.4,60 v2.4 q3.4,1.4 6.8,0 v-2.4" fill="none" stroke="#555" stroke-width="1.2"/><polygon points="666.40,49.50 667.99,53.62 672.39,53.85 668.97,56.63 670.10,60.90 666.40,58.50 662.70,60.90 663.83,56.63 660.41,53.85 664.81,53.62" fill="#2b2b2b"/><path d="M696.2,52.8 V63.2 a6.8,2.8 0 0 0 13.6,0 V52.8" fill="#fff" stroke="#333" stroke-width="1.3"/><ellipse cx="703" cy="52.8" rx="6.8" ry="2.8" fill="#fff" stroke="#333" stroke-width="1.3"/><path d="M699.6,59.6 v2.4 q3.4,1.4 6.8,0 v-2.4" fill="none" stroke="#555" stroke-width="1.2"/><path d="M706.2,58 L712.4,62.2 L709.6,62.8 L711.6,66.4 L710.2,67.2 L708.2,63.6 L706.4,65.4 Z" fill="#2b2b2b"/><path d="M731.6,58.6 H746.6 V66.4 H731.6 Z M731.6,58.6 L729.2,56 V63.8 L731.6,66.4 M729.2,56 H731 M738.6,56 H744 L746.6,58.6" fill="#fff" stroke="#2b2b2b" stroke-width="1.1" stroke-linejoin="round"/><path d="M731.5999999999999,54.6 V57.6 a3.2,1.3 0 0 0 6.4,0 V54.6" fill="#fff" stroke="#2b2b2b" stroke-width="1.1"/><ellipse cx="734.8" cy="54.6" rx="3.2" ry="1.3" fill="#fff" stroke="#2b2b2b" stroke-width="1.1"/><path d="M739.5,49.4 V52.2 a2.9,1.2 0 0 0 5.8,0 V49.4" fill="#fff" stroke="#2b2b2b" stroke-width="1.1"/><ellipse cx="742.4" cy="49.4" rx="2.9" ry="1.2" fill="#fff" stroke="#2b2b2b" stroke-width="1.1"/><path d="M742.4,53.6 V57" stroke="#2b2b2b" stroke-width="1.1"/><ellipse cx="742.4" cy="57.4" rx="1.8" ry=".7" fill="none" stroke="#2b2b2b" stroke-width=".9"/><path d="M766.4,48.4 H770.6 L772.4,50.199999999999996 V58.0 H763.8 L762,56.199999999999996 V53.0 H766.4 Z M768.2,50.199999999999996 H772.4 M768.2,50.199999999999996 V54.8 H763.8 V58.0 M766.4,48.4 L768.2,50.199999999999996 M762,53.0 L763.8,54.8" fill="#fff" stroke="#2b2b2b" stroke-width="1" stroke-linejoin="round"/><path d="M776.0,57.8 H780.2 L782.0,59.599999999999994 V67.39999999999999 H773.4 L771.6,65.6 V62.4 H776.0 Z M777.8000000000001,59.599999999999994 H782.0 M777.8000000000001,59.599999999999994 V64.2 H773.4 V67.39999999999999 M776.0,57.8 L777.8000000000001,59.599999999999994 M771.6,62.4 L773.4,64.2" fill="#fff" stroke="#2b2b2b" stroke-width="1" stroke-linejoin="round"/><path d="M763.6,59.6 V63.4 H767.2" fill="none" stroke="#2b2b2b" stroke-width="1.3"/><path d="M770.2,63.4 l-3.2,-2.4 v4.8 z" fill="#2b2b2b"/><rect x="797.6" y="49.9" width="16.6" height="16.6" rx="1" fill="#9a9a9a" stroke="#2b2b2b" stroke-width="1.3"/><rect x="799" y="51.3" width="6.6" height="6.4" fill="#fff"/><path d="M805.9,49.9 V66.5 M797.6,58.2 H814.2" stroke="#2b2b2b" stroke-width="1.3"/><circle cx="838.4" cy="52.6" r="3.1" fill="#fff" stroke="#2b2b2b" stroke-width="1"/><circle cx="845.4" cy="56" r="3.1" fill="#8a8a8a" stroke="#2b2b2b" stroke-width="1"/><circle cx="835.2" cy="58.4" r="3.1" fill="#8a8a8a" stroke="#2b2b2b" stroke-width="1"/><circle cx="841.6" cy="62.6" r="3.1" fill="#8a8a8a" stroke="#2b2b2b" stroke-width="1"/><circle cx="840.2" cy="57.4" r="8.2" fill="none" stroke="#2b2b2b" stroke-width=".8" stroke-dasharray="1 2.2"/><path d="M865.4,51 L867.4,49.2 H870.6 V62.4 L873.4,60.2 V66 H867.8 L865.4,63.6 Z M865.4,51 L867.8,53.4 V66 M867.8,53.4 L870.6,51" fill="#fff" stroke="#2b2b2b" stroke-width="1.1" stroke-linejoin="round"/><path d="M876,49.2 H880.6 L882.8,51.4 V66.2 H875.6 V60.2 L878,62.4 V51 Z" fill="#9a9a9a" stroke="#2b2b2b" stroke-width="1.1" stroke-linejoin="round"/><path d="M871,49.6 L876.6,55 V62 L871,57 Z" fill="#cfcfcf" opacity=".8"/><rect x="-0.81" y="-4.62" width="1.61" height="2.10" transform="translate(908,53.8) rotate(0.0)" fill="#2b2b2b"/><rect x="-0.81" y="-4.62" width="1.61" height="2.10" transform="translate(908,53.8) rotate(45.0)" fill="#2b2b2b"/><rect x="-0.81" y="-4.62" width="1.61" height="2.10" transform="translate(908,53.8) rotate(90.0)" fill="#2b2b2b"/><rect x="-0.81" y="-4.62" width="1.61" height="2.10" transform="translate(908,53.8) rotate(135.0)" fill="#2b2b2b"/><rect x="-0.81" y="-4.62" width="1.61" height="2.10" transform="translate(908,53.8) rotate(180.0)" fill="#2b2b2b"/><rect x="-0.81" y="-4.62" width="1.61" height="2.10" transform="translate(908,53.8) rotate(225.0)" fill="#2b2b2b"/><rect x="-0.81" y="-4.62" width="1.61" height="2.10" transform="translate(908,53.8) rotate(270.0)" fill="#2b2b2b"/><rect x="-0.81" y="-4.62" width="1.61" height="2.10" transform="translate(908,53.8) rotate(315.0)" fill="#2b2b2b"/><circle cx="908" cy="53.8" r="3.5" fill="#2b2b2b"/><circle cx="908" cy="53.8" r="1.50" fill="#fff"/><rect x="-1.08" y="-6.20" width="2.16" height="2.82" transform="translate(915.4,61) rotate(0.0)" fill="#2b2b2b"/><rect x="-1.08" y="-6.20" width="2.16" height="2.82" transform="translate(915.4,61) rotate(45.0)" fill="#2b2b2b"/><rect x="-1.08" y="-6.20" width="2.16" height="2.82" transform="translate(915.4,61) rotate(90.0)" fill="#2b2b2b"/><rect x="-1.08" y="-6.20" width="2.16" height="2.82" transform="translate(915.4,61) rotate(135.0)" fill="#2b2b2b"/><rect x="-1.08" y="-6.20" width="2.16" height="2.82" transform="translate(915.4,61) rotate(180.0)" fill="#2b2b2b"/><rect x="-1.08" y="-6.20" width="2.16" height="2.82" transform="translate(915.4,61) rotate(225.0)" fill="#2b2b2b"/><rect x="-1.08" y="-6.20" width="2.16" height="2.82" transform="translate(915.4,61) rotate(270.0)" fill="#2b2b2b"/><rect x="-1.08" y="-6.20" width="2.16" height="2.82" transform="translate(915.4,61) rotate(315.0)" fill="#2b2b2b"/><circle cx="915.4" cy="61" r="4.7" fill="#2b2b2b"/><circle cx="915.4" cy="61" r="2.10" fill="#fff"/><rect x="-1.33" y="-7.66" width="2.67" height="3.48" transform="translate(946,56.4) rotate(0.0)" fill="#2b2b2b"/><rect x="-1.33" y="-7.66" width="2.67" height="3.48" transform="translate(946,56.4) rotate(36.0)" fill="#2b2b2b"/><rect x="-1.33" y="-7.66" width="2.67" height="3.48" transform="translate(946,56.4) rotate(72.0)" fill="#2b2b2b"/><rect x="-1.33" y="-7.66" width="2.67" height="3.48" transform="translate(946,56.4) rotate(108.0)" fill="#2b2b2b"/><rect x="-1.33" y="-7.66" width="2.67" height="3.48" transform="translate(946,56.4) rotate(144.0)" fill="#2b2b2b"/><rect x="-1.33" y="-7.66" width="2.67" height="3.48" transform="translate(946,56.4) rotate(180.0)" fill="#2b2b2b"/><rect x="-1.33" y="-7.66" width="2.67" height="3.48" transform="translate(946,56.4) rotate(216.0)" fill="#2b2b2b"/><rect x="-1.33" y="-7.66" width="2.67" height="3.48" transform="translate(946,56.4) rotate(252.0)" fill="#2b2b2b"/><rect x="-1.33" y="-7.66" width="2.67" height="3.48" transform="translate(946,56.4) rotate(288.0)" fill="#2b2b2b"/><rect x="-1.33" y="-7.66" width="2.67" height="3.48" transform="translate(946,56.4) rotate(324.0)" fill="#2b2b2b"/><circle cx="946" cy="56.4" r="5.8" fill="#2b2b2b"/><circle cx="946" cy="56.4" r="2.70" fill="#fff"/><path d="M937.2,66 H955" stroke="#2b2b2b" stroke-width="2"/><path d="M938.4,65.4 l1.6,-2.4 l1.6,2.4 M942.6,65.4 l1.6,-2.4 l1.6,2.4 M946.8,65.4 l1.6,-2.4 l1.6,2.4 M951,65.4 l1.6,-2.4 l1.6,2.4" fill="#2b2b2b" stroke="#2b2b2b" stroke-width=".6"/><rect x="971.8" y="51.6" width="16.6" height="6.2" fill="none" stroke="#2b2b2b" stroke-width="1.4"/><path d="M975.4,48.4 L973.8000000000001,61" stroke="#2b2b2b" stroke-width="2"/><path d="M979.5999999999999,48.4 L978.0,61" stroke="#2b2b2b" stroke-width="2"/><path d="M983.8,48.4 L982.2,61" stroke="#2b2b2b" stroke-width="2"/><path d="M988.0,48.4 L986.4000000000001,61" stroke="#2b2b2b" stroke-width="2"/><path d="M973.40,65.20 L984.20,65.20" stroke="#2b2b2b" stroke-width="1.8" fill="none"/><path d="M987.40,65.20 L984.20,67.80 L984.20,62.60 Z" fill="#2b2b2b"/><path d="M1012.6,49.4 H1018.8 a3.2,3.6 0 0 1 0,7.2 H1008.8 a3.2,3.6 0 0 1 0,-7.2 Z" fill="#fff" stroke="#7d7d7d" stroke-width="1"/><ellipse cx="1018.8" cy="53" rx="2" ry="3.6" fill="none" stroke="#7d7d7d" stroke-width=".8"/><path d="M1012.6,59.4 H1018.8 a3.2,3.6 0 0 1 0,7.2 H1008.8 a3.2,3.6 0 0 1 0,-7.2 Z" fill="#fff" stroke="#7d7d7d" stroke-width="1"/><ellipse cx="1018.8" cy="63" rx="2" ry="3.6" fill="none" stroke="#7d7d7d" stroke-width=".8"/><path d="M1013.80,53.00 L1008.40,53.00" stroke="#2b2b2b" stroke-width="1.6" fill="none"/><path d="M1005.40,53.00 L1008.40,50.50 L1008.40,55.50 Z" fill="#2b2b2b"/><path d="M1014.60,63.00 L1019.60,63.00" stroke="#2b2b2b" stroke-width="1.6" fill="none"/><path d="M1022.60,63.00 L1019.60,65.50 L1019.60,60.50 Z" fill="#2b2b2b"/><path d="M1009,51 v4 M1017.8,61 v4" stroke="#2b2b2b" stroke-width="1.4"/><path d="M1058.6,58 V49.4 H1045.6 V64.2 H1049" fill="none" stroke="#2b2b2b" stroke-width="1.3"/><path d="M1048,52.4 h1.2 M1050.4,52.4 H1056.6" stroke="#2b2b2b" stroke-width="1.1"/><path d="M1048,54.8 h1.2 M1050.4,54.8 H1056.6" stroke="#2b2b2b" stroke-width="1.1"/><path d="M1048,57.2 h1.2 M1050.4,57.2 H1056.6" stroke="#2b2b2b" stroke-width="1.1"/><path d="M1049.8,63.2 C1052,59.6 1058,59.6 1060.2,63.2 C1058,66.6 1052,66.6 1049.8,63.2 Z" fill="#fff" stroke="#2b2b2b" stroke-width="1"/><circle cx="1055" cy="63.2" r="1.6" fill="none" stroke="#2b2b2b" stroke-width=".9"/><path d="M1050.2,66.8 L1060.4,58" stroke="#2b2b2b" stroke-width="1.3"/><path d="M1086,52 L1088.4,49.6 H1092.4 L1094.6,52 V66.4 H1086 Z M1086,52 H1094.6" fill="#fff" stroke="#2b2b2b" stroke-width="1.2" stroke-linejoin="round"/><path d="M1077.6,59 L1079.6,56.8 H1083.6 L1085.6,59 V66.4 H1077.6 Z M1077.6,59 H1085.6" fill="#fff" stroke="#2b2b2b" stroke-width="1.2" stroke-linejoin="round"/><path d="M1077,53.6 H1085 M1081,49.6 V57.6" stroke="#1e5fb3" stroke-width="2"/><ellipse cx="1127.6" cy="57.6" rx="5" ry="8.2" transform="rotate(12 1127.6 57.6)" fill="none" stroke="#1f1f1f" stroke-width="2"/><path d="M1127.40,57.40 L1120.14,63.12" stroke="#1e5fb3" stroke-width="2.2" fill="none"/><path d="M1117.00,65.60 L1118.28,60.77 L1122.00,65.48 Z" fill="#1e5fb3"/><ellipse cx="1157.8" cy="57.6" rx="7.6" ry="4" fill="none" stroke="#1f1f1f" stroke-width="2.1"/><path d="M1152.6,50.2 C1157,48.6 1162.4,49.6 1166.4,52.2 M1163,65.2 C1158.6,66.6 1153.2,65.6 1149.2,63" fill="none" stroke="#1e5fb3" stroke-width="1.3"/><path d="M1150,49.4 l3.6,-1.4 l0.2,3.6 z M1165.6,66 l-3.6,1.4 l-0.2,-3.6 z" fill="#1e5fb3"/><ellipse cx="1191.9" cy="54.6" rx="7.8" ry="4.3" fill="none" stroke="#1f1f1f" stroke-width="2.1"/><path d="M1183.90,60.40 L1183.90,63.80" stroke="#1e5fb3" stroke-width="1.3" fill="none"/><path d="M1183.90,66.40 L1182.00,63.80 L1185.80,63.80 Z" fill="#1e5fb3"/><path d="M1188.40,62.00 L1188.40,65.40" stroke="#1e5fb3" stroke-width="1.3" fill="none"/><path d="M1188.40,68.00 L1186.50,65.40 L1190.30,65.40 Z" fill="#1e5fb3"/><path d="M1194.80,62.00 L1194.80,65.40" stroke="#1e5fb3" stroke-width="1.3" fill="none"/><path d="M1194.80,68.00 L1192.90,65.40 L1196.70,65.40 Z" fill="#1e5fb3"/><path d="M1199.90,60.40 L1199.90,63.80" stroke="#1e5fb3" stroke-width="1.3" fill="none"/><path d="M1199.90,66.40 L1198.00,63.80 L1201.80,63.80 Z" fill="#1e5fb3"/><ellipse cx="1225.7" cy="57.8" rx="7.8" ry="4.4" fill="none" stroke="#1f1f1f" stroke-width="2.1"/><path d="M1216.30,48.60 L1219.33,51.38" stroke="#1e5fb3" stroke-width="1.3" fill="none"/><path d="M1221.10,53.00 L1218.18,52.63 L1220.48,50.13 Z" fill="#1e5fb3"/><path d="M1235.10,48.60 L1232.07,51.38" stroke="#1e5fb3" stroke-width="1.3" fill="none"/><path d="M1230.30,53.00 L1230.92,50.13 L1233.22,52.63 Z" fill="#1e5fb3"/><path d="M1216.30,67.00 L1219.33,64.22" stroke="#1e5fb3" stroke-width="1.3" fill="none"/><path d="M1221.10,62.60 L1220.48,65.47 L1218.18,62.97 Z" fill="#1e5fb3"/><path d="M1235.10,67.00 L1232.07,64.22" stroke="#1e5fb3" stroke-width="1.3" fill="none"/><path d="M1230.30,62.60 L1233.22,62.97 L1230.92,65.47 Z" fill="#1e5fb3"/><ellipse cx="1260" cy="56.8" rx="7.8" ry="4.3" fill="none" stroke="#1f1f1f" stroke-width="2.1"/><path d="M1252.2,48.8 v2.6" stroke="#1e5fb3" stroke-width="1.5"/><path d="M1256,48.8 v2.6" stroke="#1e5fb3" stroke-width="1.5"/><path d="M1260,48.8 v2.6" stroke="#1e5fb3" stroke-width="1.5"/><path d="M1264,48.8 v2.6" stroke="#1e5fb3" stroke-width="1.5"/><path d="M1267.8,48.8 v2.6" stroke="#1e5fb3" stroke-width="1.5"/><rect x="1258.4" y="59" width="3.2" height="3" fill="#fff"/><path d="M1260.00,57.60 L1260.00,64.00" stroke="#1e5fb3" stroke-width="1.6" fill="none"/><path d="M1260.00,67.00 L1257.70,64.00 L1262.30,64.00 Z" fill="#1e5fb3"/></svg>
<div id="strip"></div>
<div id="panel"></div>
<div class="abs" style="left:79px;top:84px;width:263px;height:30px;border:1px solid #b4b4b4;border-radius:3px;background:#fff"></div>
<span class="t" style="left:85.46px;top:93.17px;font-size:13.5px;color:#7d7d7d;transform:scaleX(0.9570);font-style:italic">Filter by name</span>
<span class="t" style="left:43.48px;top:123.60px;font-size:13px;color:#2f2f2f;transform:scaleX(0.9884);font-weight:700">Instances (23)</span>
<span class="t" style="left:65.58px;top:150.55px;font-size:13px;color:#333;transform:scaleX(1.0164)">Exercise 1 Assembly</span>
<span class="t" style="left:85.48px;top:176.55px;font-size:13px;color:#a8a8a8;transform:scaleX(1.0177)">Origin</span>
<span class="t" style="left:85.48px;top:202.55px;font-size:13px;color:#333;transform:scaleX(1.0129)">Frame (4)</span>
<span class="t" style="left:104.28px;top:228.55px;font-size:13px;color:#333;transform:scaleX(1.0205)">Motor Plate &lt;1&gt;</span>
<span class="t" style="left:104.28px;top:254.55px;font-size:13px;color:#333;transform:scaleX(1.0084)">Outer Plate &lt;1&gt;</span>
<span class="t" style="left:104.28px;top:280.55px;font-size:13px;color:#333;transform:scaleX(0.9859)">0.75 in. Round Spacer &lt;1&gt;</span>
<span class="t" style="left:104.28px;top:306.55px;font-size:13px;color:#333;transform:scaleX(1.0167)">Spacers</span>
<span class="t" style="left:85.48px;top:332.55px;font-size:13px;color:#333;transform:scaleX(1.0212)">Motor (6)</span>
<span class="t" style="left:104.28px;top:358.55px;font-size:13px;color:#333;transform:scaleX(1.0125)">Falcon 500 Brushless Motor (...</span>
<span class="t" style="left:104.28px;top:384.55px;font-size:13px;color:#333;transform:scaleX(0.9813)">12T Steel Spur Gear (20 DP, ...</span>
<span class="t" style="left:104.28px;top:410.55px;font-size:13px;color:#333;transform:scaleX(1.0110)">8mm Motor Spacer (1/8&quot; L, 5/...</span>
<span class="t" style="left:104.28px;top:436.55px;font-size:13px;color:#333;transform:scaleX(1.0252)">Motor Shaft Screws</span>
<span class="t" style="left:104.28px;top:462.55px;font-size:13px;color:#333;transform:scaleX(0.9995)">8mm Motor Spacer (1/16&quot; L, ...</span>
<span class="t" style="left:104.28px;top:488.55px;font-size:13px;color:#333;transform:scaleX(0.9928)">#10-32 x 3/8&quot; L BHCS (Steel, ...</span>
<span class="t" style="left:85.48px;top:514.55px;font-size:13px;color:#333;transform:scaleX(1.0216)">Power Transmission (4)</span>
<span class="t" style="left:104.28px;top:540.55px;font-size:13px;color:#333;transform:scaleX(0.9852)">4 in. Rounded Hex Shaft &lt;1&gt;</span>
<span class="t" style="left:104.28px;top:566.55px;font-size:13px;color:#333;transform:scaleX(1.0117)">60t Aluminum Spur Gear (20 ...</span>
<span class="t" style="left:104.28px;top:592.55px;font-size:13px;color:#333;transform:scaleX(0.9951)">1/2&quot; Hex Shaft Spacer (1/8&quot; L,...</span>
<span class="t" style="left:104.28px;top:618.55px;font-size:13px;color:#333;transform:scaleX(0.9951)">1/2&quot; Hex Shaft Spacer (1/8&quot; L,...</span>
<span class="t" style="left:85.48px;top:644.55px;font-size:13px;color:#333;transform:scaleX(1.0026)">Bearings (2)</span>
<span class="t" style="left:104.28px;top:670.55px;font-size:13px;color:#333;transform:scaleX(0.9875)">1/2&quot; Rounded Hex (13.75mm)...</span>
<span class="t" style="left:104.28px;top:696.55px;font-size:13px;color:#333;transform:scaleX(0.9875)">1/2&quot; Rounded Hex (13.75mm)...</span>
<span class="t" style="left:85.48px;top:722.55px;font-size:13px;color:#333;transform:scaleX(1.0111)">Hardware (7)</span>
<span class="t" style="left:104.28px;top:748.55px;font-size:13px;color:#333;transform:scaleX(0.9860)">#10-32 x 1/2&quot; L BHCS (Steel, ...</span>
<span class="t" style="left:104.28px;top:774.55px;font-size:13px;color:#333;transform:scaleX(0.9860)">#10-32 x 1/2&quot; L BHCS (Steel, ...</span>
<span class="t" style="left:104.28px;top:800.55px;font-size:13px;color:#333;transform:scaleX(0.9866)">#10-32 x 1-1/2&quot; L BHCS (Stee...</span>
<span class="t" style="left:104.28px;top:826.55px;font-size:13px;color:#333;transform:scaleX(1.0100)">Gearbox Bolts</span>
<span class="t" style="left:104.28px;top:852.55px;font-size:13px;color:#333;transform:scaleX(1.0199)">#10-32 Nylon-Insert Locknut ...</span>
<span class="t" style="left:104.28px;top:878.55px;font-size:13px;color:#333;transform:scaleX(1.0257)">Nut Replicate</span>
<span class="t" style="left:104.28px;top:904.55px;font-size:13px;color:#333;transform:scaleX(1.0039)">#10-32 x 0.5&quot; L Shaft End Scr...</span>
<span class="t" style="left:62.48px;top:930.55px;font-size:13px;color:#333;transform:scaleX(1.0196)">Items (0)</span>
<span class="t" style="left:62.48px;top:956.55px;font-size:13px;color:#333;transform:scaleX(1.0014)">Loads (0)</span>
<span class="t" style="left:62.48px;top:982.55px;font-size:13px;color:#333;transform:scaleX(1.0005)">Mate Features (18)</span>
<span class="t" style="left:104.28px;top:1008.55px;font-size:13px;color:#9c9c9c;transform:scaleX(0.9947)">Fastened 1</span>
<span class="t" style="left:104.28px;top:1034.55px;font-size:13px;color:#9c9c9c;transform:scaleX(1.0100)">Fastened 2</span>
<div class="abs" style="left:386px;top:538px;width:33px;height:34px;border:1px solid #a9a9a9;border-left:none;background:#fff"></div>
<svg class="i" style="left:0;top:0" width="1920" height="1080" viewBox="0 0 1920 1080"><path d="M51.6,94 H65.4 L60,100.6 V107.2 L57,105.4 V100.6 Z" fill="none" stroke="#333" stroke-width="1.3" stroke-linejoin="round"/><rect x="356.1" y="92" width="1.8" height="2" fill="#222"/><rect x="359.1" y="92" width="10.9" height="2" fill="#222"/><rect x="356.1" y="96" width="1.8" height="2" fill="#222"/><rect x="359.1" y="96" width="10.9" height="2" fill="#222"/><rect x="356.1" y="100" width="1.8" height="2" fill="#222"/><rect x="359.1" y="100" width="10.9" height="2" fill="#222"/><rect x="356.1" y="104" width="1.8" height="2" fill="#222"/><rect x="359.1" y="104" width="10.9" height="2" fill="#222"/><path d="M357.8,129.5 V123.9 H363.6 L364.6,125.9 H374 V136.1 H364.5 M360,136.1 H357.8 V133.9" fill="none" stroke="#333" stroke-width="1.5" stroke-linejoin="round"/><path d="M358.2,132 H365.8 M362,128.2 V135.8" stroke="#1b5cab" stroke-width="2"/><path d="M49.5,222.5 V325 M45.5,325 H54" stroke="#d9d9d9" stroke-width="1" fill="none"/><path d="M49.5,352.5 V507 M45.5,507 H54" stroke="#d9d9d9" stroke-width="1" fill="none"/><path d="M49.5,534.5 V637 M45.5,637 H54" stroke="#d9d9d9" stroke-width="1" fill="none"/><path d="M49.5,664.5 V715 M45.5,715 H54" stroke="#d9d9d9" stroke-width="1" fill="none"/><path d="M49.5,742.5 V923.3 M45.5,923.3 H54" stroke="#d9d9d9" stroke-width="1" fill="none"/><path d="M49.5,1002.5 V1050" stroke="#d9d9d9" stroke-width="1"/><g transform="translate(45.80,148.70)" ><rect x="3.5" y="3.6" width="8.5" height="8.4" fill="#fff" stroke="#4a4a4a" stroke-width="1.3"/><rect x="4.4" y="4.4" width="4.2" height="4" fill="#999"/><path d="M3.5,9.2 H9.2 V3.6" fill="none" stroke="#4a4a4a" stroke-width="1.1"/><path d="M0.4,2.6 V0.4 H2.6 M12.4,0.4 H14.6 V2.6 M14.6,12.6 V14.8 H12.4 M2.6,14.8 H0.4 V12.6" fill="none" stroke="#6a6a6a" stroke-width="1.3"/><path d="M0.3,0.3 l2,2 M14.7,0.3 l-2,2 M14.7,14.9 l-2,-2 M0.3,14.9 l2,-2" stroke="#6a6a6a" stroke-width="1.1"/><path d="M7,0.5 h1 M7,14.7 h1 M0.5,7.2 v1 M14.5,7.2 v1" stroke="#999" stroke-width="1"/></g><path d="M281.1,147.6 V153" stroke="#222" stroke-width="1.7"/><path d="M277.1,151.8 H285.1 L281.1,156.6 Z" fill="#222"/><rect x="273.9" y="157.8" width="14.1" height="1.4" fill="#222"/><clipPath id="hc273_159"><rect x="273.9" y="159" width="14.1" height="5"/></clipPath><g clip-path="url(#hc273_159)"><path d="M268.90,164.00 L273.90,159.00" stroke="#222" stroke-width="1.5"/><path d="M272.20,164.00 L277.20,159.00" stroke="#222" stroke-width="1.5"/><path d="M275.50,164.00 L280.50,159.00" stroke="#222" stroke-width="1.5"/><path d="M278.80,164.00 L283.80,159.00" stroke="#222" stroke-width="1.5"/><path d="M282.10,164.00 L287.10,159.00" stroke="#222" stroke-width="1.5"/><path d="M285.40,164.00 L290.40,159.00" stroke="#222" stroke-width="1.5"/><path d="M288.70,164.00 L293.70,159.00" stroke="#222" stroke-width="1.5"/><path d="M292.00,164.00 L297.00,159.00" stroke="#222" stroke-width="1.5"/></g><circle cx="73.3" cy="182.6" r="3.2" fill="none" stroke="#c8c8c8" stroke-width="1"/><path d="M72.0,182.6 h2.6 M73.3,181.3 v2.6" stroke="#c8c8c8" stroke-width=".8"/><path d="M45.30,206.40 L50.00,211.00 L54.70,206.40" fill="none" stroke="#555" stroke-width="2" stroke-linecap="round" stroke-linejoin="round"/><g transform="translate(66.10,202.40)" ><path d="M0.6,0.6 H5.3 L6.7,2.4 H14.5 V11.6 H0.6 Z" fill="#fff" stroke="#8a8a8a" stroke-width="1.2" stroke-linejoin="round"/><path d="M0.6,11.6 H14.5" stroke="#8a8a8a" stroke-width="2.0"/></g><path d="M281.1,199.6 V205" stroke="#222" stroke-width="1.7"/><path d="M277.1,203.8 H285.1 L281.1,208.6 Z" fill="#222"/><rect x="273.9" y="209.8" width="14.1" height="1.4" fill="#222"/><clipPath id="hc273_211"><rect x="273.9" y="211" width="14.1" height="5"/></clipPath><g clip-path="url(#hc273_211)"><path d="M268.90,216.00 L273.90,211.00" stroke="#222" stroke-width="1.5"/><path d="M272.20,216.00 L277.20,211.00" stroke="#222" stroke-width="1.5"/><path d="M275.50,216.00 L280.50,211.00" stroke="#222" stroke-width="1.5"/><path d="M278.80,216.00 L283.80,211.00" stroke="#222" stroke-width="1.5"/><path d="M282.10,216.00 L287.10,211.00" stroke="#222" stroke-width="1.5"/><path d="M285.40,216.00 L290.40,211.00" stroke="#222" stroke-width="1.5"/><path d="M288.70,216.00 L293.70,211.00" stroke="#222" stroke-width="1.5"/><path d="M292.00,216.00 L297.00,211.00" stroke="#222" stroke-width="1.5"/></g><g transform="translate(85.00,226.90)" ><path d="M10.6,3.25 H14.8 V14.5 H3.3 V11.4 H10.6 Z" fill="#fff" stroke="#606060" stroke-width="1.0" stroke-linejoin="round"/><path d="M10.6,3.25 L7.5,0.3 H11.7 L14.8,3.25 M7.5,0.3 V8.25 H0.3 L3.3,11.4 M0.3,8.25 V11.4 L3.3,14.5 M7.5,8.25 L10.6,11.4" fill="none" stroke="#606060" stroke-width="1.0" stroke-linejoin="round" stroke-linecap="round"/></g><rect x="275.1" y="228" width="12" height="2.7" fill="#222"/><rect x="275.1" y="232.9" width="12" height="1.5" fill="#222"/><clipPath id="hc275_234"><rect x="275.1" y="234.2" width="12" height="5.8"/></clipPath><g clip-path="url(#hc275_234)"><path d="M269.30,240.00 L275.10,234.20" stroke="#222" stroke-width="1.5"/><path d="M272.60,240.00 L278.40,234.20" stroke="#222" stroke-width="1.5"/><path d="M275.90,240.00 L281.70,234.20" stroke="#222" stroke-width="1.5"/><path d="M279.20,240.00 L285.00,234.20" stroke="#222" stroke-width="1.5"/><path d="M282.50,240.00 L288.30,234.20" stroke="#222" stroke-width="1.5"/><path d="M285.80,240.00 L291.60,234.20" stroke="#222" stroke-width="1.5"/><path d="M289.10,240.00 L294.90,234.20" stroke="#222" stroke-width="1.5"/><path d="M292.40,240.00 L298.20,234.20" stroke="#222" stroke-width="1.5"/></g><g transform="translate(85.00,252.90)" ><path d="M10.6,3.25 H14.8 V14.5 H3.3 V11.4 H10.6 Z" fill="#fff" stroke="#606060" stroke-width="1.0" stroke-linejoin="round"/><path d="M10.6,3.25 L7.5,0.3 H11.7 L14.8,3.25 M7.5,0.3 V8.25 H0.3 L3.3,11.4 M0.3,8.25 V11.4 L3.3,14.5 M7.5,8.25 L10.6,11.4" fill="none" stroke="#606060" stroke-width="1.0" stroke-linejoin="round" stroke-linecap="round"/></g><g transform="translate(85.00,278.90)" ><path d="M10.6,3.25 H14.8 V14.5 H3.3 V11.4 H10.6 Z" fill="#fff" stroke="#606060" stroke-width="1.0" stroke-linejoin="round"/><path d="M10.6,3.25 L7.5,0.3 H11.7 L14.8,3.25 M7.5,0.3 V8.25 H0.3 L3.3,11.4 M0.3,8.25 V11.4 L3.3,14.5 M7.5,8.25 L10.6,11.4" fill="none" stroke="#606060" stroke-width="1.0" stroke-linejoin="round" stroke-linecap="round"/></g><path d="M66.70,308.40 L71.20,313.00 L66.70,317.60" fill="none" stroke="#555" stroke-width="2" stroke-linecap="round" stroke-linejoin="round"/><g transform="translate(85.00,303.80)" ><path d="M2.5,11.8 H14.8 V15.95 H2.5 Z M2.5,11.8 L0.2,9.3 V13.9 L2.5,15.95 M0.2,9.3 H12.5 L14.8,11.8" fill="#fff" stroke="#606060" stroke-width="1" stroke-linejoin="round"/><path d="M1.9,6.4 V9.3 a2.7,1.05 0 0 0 5.4,0 V6.4" fill="#fff" stroke="#606060" stroke-width="1"/><ellipse cx="4.6" cy="6.4" rx="2.7" ry="1.05" fill="#fff" stroke="#606060" stroke-width="1"/><path d="M8.1,1.4 V4.2 a2.9,1.3 0 0 0 5.8,0 V1.4" fill="#fff" stroke="#606060" stroke-width="1"/><ellipse cx="11" cy="1.4" rx="2.9" ry="1.05" fill="#fff" stroke="#606060" stroke-width="1"/><path d="M11,5.5 V8.9" stroke="#606060" stroke-width="1"/><ellipse cx="11" cy="9.3" rx="1.6" ry="0.6" fill="none" stroke="#606060" stroke-width=".8"/></g><path d="M45.30,336.40 L50.00,341.00 L54.70,336.40" fill="none" stroke="#555" stroke-width="2" stroke-linecap="round" stroke-linejoin="round"/><g transform="translate(66.10,332.40)" ><path d="M0.6,0.6 H5.3 L6.7,2.4 H14.5 V11.6 H0.6 Z" fill="#fff" stroke="#8a8a8a" stroke-width="1.2" stroke-linejoin="round"/><path d="M0.6,11.6 H14.5" stroke="#8a8a8a" stroke-width="2.0"/></g><path d="M66.70,360.40 L71.20,365.00 L66.70,369.60" fill="none" stroke="#555" stroke-width="2" stroke-linecap="round" stroke-linejoin="round"/><g transform="translate(84.80,356.70)" ><rect x="3.5" y="3.6" width="8.5" height="8.4" fill="#fff" stroke="#4a4a4a" stroke-width="1.3"/><rect x="4.4" y="4.4" width="4.2" height="4" fill="#999"/><path d="M3.5,9.2 H9.2 V3.6" fill="none" stroke="#4a4a4a" stroke-width="1.1"/><path d="M0.4,2.6 V0.4 H2.6 M12.4,0.4 H14.6 V2.6 M14.6,12.6 V14.8 H12.4 M2.6,14.8 H0.4 V12.6" fill="none" stroke="#6a6a6a" stroke-width="1.3"/><path d="M0.3,0.3 l2,2 M14.7,0.3 l-2,2 M14.7,14.9 l-2,-2 M0.3,14.9 l2,-2" stroke="#6a6a6a" stroke-width="1.1"/><path d="M7,0.5 h1 M7,14.7 h1 M0.5,7.2 v1 M14.5,7.2 v1" stroke="#999" stroke-width="1"/></g><g transform="translate(84.20,356.20)" ><rect x="0" y="0" width="7.8" height="6.7" fill="#3f77cc"/><rect x="0.3" y="6.7" width="7.2" height="1.2" fill="#a9c4ea" opacity=".8"/><rect x="0.9" y="0.8" width="1.7" height="1.5" fill="#7fb2f2"/><rect x="3.1" y="0.8" width="1.7" height="1.5" fill="#7fb2f2"/><rect x="5.6" y="0.8" width="1.5" height="1.5" fill="#7fb2f2"/><rect x="0.9" y="2.9" width="1.7" height="1.4" fill="#6fa4ea"/><rect x="3.1" y="2.9" width="1.7" height="1.4" fill="#6fa4ea"/><rect x="5.6" y="2.9" width="1.5" height="1.4" fill="#6fa4ea"/><rect x="0.9" y="5.0" width="1.7" height="0.9" fill="#d8e8fb"/><rect x="3.1" y="5.0" width="1.7" height="0.9" fill="#d8e8fb"/><rect x="5.6" y="5.0" width="1.5" height="0.9" fill="#d8e8fb"/></g><rect x="300" y="355" width="2" height="2" fill="#111"/><rect x="300" y="358" width="2" height="2" fill="#111"/><rect x="300" y="368" width="2" height="2" fill="#111"/><rect x="300" y="371" width="2" height="2" fill="#111"/><circle cx="301" cy="364" r="3.05" fill="#2b2b2b"/><path d="M66.70,386.40 L71.20,391.00 L66.70,395.60" fill="none" stroke="#555" stroke-width="2" stroke-linecap="round" stroke-linejoin="round"/><g transform="translate(85.00,382.90)" ><path d="M10.6,3.25 H14.8 V14.5 H3.3 V11.4 H10.6 Z" fill="#fff" stroke="#606060" stroke-width="1.0" stroke-linejoin="round"/><path d="M10.6,3.25 L7.5,0.3 H11.7 L14.8,3.25 M7.5,0.3 V8.25 H0.3 L3.3,11.4 M0.3,8.25 V11.4 L3.3,14.5 M7.5,8.25 L10.6,11.4" fill="none" stroke="#606060" stroke-width="1.0" stroke-linejoin="round" stroke-linecap="round"/></g><g transform="translate(84.20,382.20)" ><rect x="0" y="0" width="7.8" height="6.7" fill="#3f77cc"/><rect x="0.3" y="6.7" width="7.2" height="1.2" fill="#a9c4ea" opacity=".8"/><rect x="0.9" y="0.8" width="1.7" height="1.5" fill="#7fb2f2"/><rect x="3.1" y="0.8" width="1.7" height="1.5" fill="#7fb2f2"/><rect x="5.6" y="0.8" width="1.5" height="1.5" fill="#7fb2f2"/><rect x="0.9" y="2.9" width="1.7" height="1.4" fill="#6fa4ea"/><rect x="3.1" y="2.9" width="1.7" height="1.4" fill="#6fa4ea"/><rect x="5.6" y="2.9" width="1.5" height="1.4" fill="#6fa4ea"/><rect x="0.9" y="5.0" width="1.7" height="0.9" fill="#d8e8fb"/><rect x="3.1" y="5.0" width="1.7" height="0.9" fill="#d8e8fb"/><rect x="5.6" y="5.0" width="1.5" height="0.9" fill="#d8e8fb"/></g><rect x="300" y="381" width="2" height="2" fill="#111"/><rect x="300" y="384" width="2" height="2" fill="#111"/><rect x="300" y="394" width="2" height="2" fill="#111"/><rect x="300" y="397" width="2" height="2" fill="#111"/><circle cx="301" cy="390" r="3.05" fill="#2b2b2b"/><g transform="translate(85.00,408.90)" ><path d="M10.6,3.25 H14.8 V14.5 H3.3 V11.4 H10.6 Z" fill="#fff" stroke="#606060" stroke-width="1.0" stroke-linejoin="round"/><path d="M10.6,3.25 L7.5,0.3 H11.7 L14.8,3.25 M7.5,0.3 V8.25 H0.3 L3.3,11.4 M0.3,8.25 V11.4 L3.3,14.5 M7.5,8.25 L10.6,11.4" fill="none" stroke="#606060" stroke-width="1.0" stroke-linejoin="round" stroke-linecap="round"/></g><g transform="translate(84.20,408.20)" ><rect x="0" y="0" width="7.8" height="6.7" fill="#3f77cc"/><rect x="0.3" y="6.7" width="7.2" height="1.2" fill="#a9c4ea" opacity=".8"/><rect x="0.9" y="0.8" width="1.7" height="1.5" fill="#7fb2f2"/><rect x="3.1" y="0.8" width="1.7" height="1.5" fill="#7fb2f2"/><rect x="5.6" y="0.8" width="1.5" height="1.5" fill="#7fb2f2"/><rect x="0.9" y="2.9" width="1.7" height="1.4" fill="#6fa4ea"/><rect x="3.1" y="2.9" width="1.7" height="1.4" fill="#6fa4ea"/><rect x="5.6" y="2.9" width="1.5" height="1.4" fill="#6fa4ea"/><rect x="0.9" y="5.0" width="1.7" height="0.9" fill="#d8e8fb"/><rect x="3.1" y="5.0" width="1.7" height="0.9" fill="#d8e8fb"/><rect x="5.6" y="5.0" width="1.5" height="0.9" fill="#d8e8fb"/></g><rect x="300" y="407" width="2" height="2" fill="#111"/><rect x="300" y="410" width="2" height="2" fill="#111"/><rect x="300" y="420" width="2" height="2" fill="#111"/><rect x="300" y="423" width="2" height="2" fill="#111"/><circle cx="301" cy="416" r="3.05" fill="#2b2b2b"/><path d="M66.70,438.40 L71.20,443.00 L66.70,447.60" fill="none" stroke="#555" stroke-width="2" stroke-linecap="round" stroke-linejoin="round"/><g transform="translate(85.20,435.20)" ><rect x="0.5" y="0.5" width="14" height="14" fill="#a9a9a9" stroke="#555" stroke-width="1.1"/><rect x="1.2" y="1.2" width="6" height="6" fill="#fff"/><path d="M7.3,0.5 V14.5 M0.5,7.3 H14.5" stroke="#555" stroke-width="1.2"/><path d="M2.2,2 V7 M2.2,2 H7 M9,2 H14 M2.2,9 V14" stroke="#777" stroke-width=".7" fill="none"/></g><g transform="translate(85.00,460.90)" ><path d="M10.6,3.25 H14.8 V14.5 H3.3 V11.4 H10.6 Z" fill="#fff" stroke="#606060" stroke-width="1.0" stroke-linejoin="round"/><path d="M10.6,3.25 L7.5,0.3 H11.7 L14.8,3.25 M7.5,0.3 V8.25 H0.3 L3.3,11.4 M0.3,8.25 V11.4 L3.3,14.5 M7.5,8.25 L10.6,11.4" fill="none" stroke="#606060" stroke-width="1.0" stroke-linejoin="round" stroke-linecap="round"/></g><g transform="translate(84.20,460.20)" ><rect x="0" y="0" width="7.8" height="6.7" fill="#3f77cc"/><rect x="0.3" y="6.7" width="7.2" height="1.2" fill="#a9c4ea" opacity=".8"/><rect x="0.9" y="0.8" width="1.7" height="1.5" fill="#7fb2f2"/><rect x="3.1" y="0.8" width="1.7" height="1.5" fill="#7fb2f2"/><rect x="5.6" y="0.8" width="1.5" height="1.5" fill="#7fb2f2"/><rect x="0.9" y="2.9" width="1.7" height="1.4" fill="#6fa4ea"/><rect x="3.1" y="2.9" width="1.7" height="1.4" fill="#6fa4ea"/><rect x="5.6" y="2.9" width="1.5" height="1.4" fill="#6fa4ea"/><rect x="0.9" y="5.0" width="1.7" height="0.9" fill="#d8e8fb"/><rect x="3.1" y="5.0" width="1.7" height="0.9" fill="#d8e8fb"/><rect x="5.6" y="5.0" width="1.5" height="0.9" fill="#d8e8fb"/></g><rect x="300" y="459" width="2" height="2" fill="#111"/><rect x="300" y="462" width="2" height="2" fill="#111"/><rect x="300" y="472" width="2" height="2" fill="#111"/><rect x="300" y="475" width="2" height="2" fill="#111"/><circle cx="301" cy="468" r="3.05" fill="#2b2b2b"/><g transform="translate(85.00,486.90)" ><path d="M10.6,3.25 H14.8 V14.5 H3.3 V11.4 H10.6 Z" fill="#fff" stroke="#606060" stroke-width="1.0" stroke-linejoin="round"/><path d="M10.6,3.25 L7.5,0.3 H11.7 L14.8,3.25 M7.5,0.3 V8.25 H0.3 L3.3,11.4 M0.3,8.25 V11.4 L3.3,14.5 M7.5,8.25 L10.6,11.4" fill="none" stroke="#606060" stroke-width="1.0" stroke-linejoin="round" stroke-linecap="round"/></g><g transform="translate(84.20,486.20)" ><rect x="0" y="0" width="7.8" height="6.7" fill="#3f77cc"/><rect x="0.3" y="6.7" width="7.2" height="1.2" fill="#a9c4ea" opacity=".8"/><rect x="0.9" y="0.8" width="1.7" height="1.5" fill="#7fb2f2"/><rect x="3.1" y="0.8" width="1.7" height="1.5" fill="#7fb2f2"/><rect x="5.6" y="0.8" width="1.5" height="1.5" fill="#7fb2f2"/><rect x="0.9" y="2.9" width="1.7" height="1.4" fill="#6fa4ea"/><rect x="3.1" y="2.9" width="1.7" height="1.4" fill="#6fa4ea"/><rect x="5.6" y="2.9" width="1.5" height="1.4" fill="#6fa4ea"/><rect x="0.9" y="5.0" width="1.7" height="0.9" fill="#d8e8fb"/><rect x="3.1" y="5.0" width="1.7" height="0.9" fill="#d8e8fb"/><rect x="5.6" y="5.0" width="1.5" height="0.9" fill="#d8e8fb"/></g><rect x="300" y="485" width="2" height="2" fill="#111"/><rect x="300" y="488" width="2" height="2" fill="#111"/><rect x="300" y="498" width="2" height="2" fill="#111"/><rect x="300" y="501" width="2" height="2" fill="#111"/><circle cx="301" cy="494" r="3.05" fill="#2b2b2b"/><path d="M45.30,518.40 L50.00,523.00 L54.70,518.40" fill="none" stroke="#555" stroke-width="2" stroke-linecap="round" stroke-linejoin="round"/><g transform="translate(66.10,514.40)" ><path d="M0.6,0.6 H5.3 L6.7,2.4 H14.5 V11.6 H0.6 Z" fill="#fff" stroke="#8a8a8a" stroke-width="1.2" stroke-linejoin="round"/><path d="M0.6,11.6 H14.5" stroke="#8a8a8a" stroke-width="2.0"/></g><g transform="translate(85.00,538.90)" ><path d="M10.6,3.25 H14.8 V14.5 H3.3 V11.4 H10.6 Z" fill="#fff" stroke="#606060" stroke-width="1.0" stroke-linejoin="round"/><path d="M10.6,3.25 L7.5,0.3 H11.7 L14.8,3.25 M7.5,0.3 V8.25 H0.3 L3.3,11.4 M0.3,8.25 V11.4 L3.3,14.5 M7.5,8.25 L10.6,11.4" fill="none" stroke="#606060" stroke-width="1.0" stroke-linejoin="round" stroke-linecap="round"/></g><g transform="translate(85.00,564.90)" ><path d="M10.6,3.25 H14.8 V14.5 H3.3 V11.4 H10.6 Z" fill="#fff" stroke="#606060" stroke-width="1.0" stroke-linejoin="round"/><path d="M10.6,3.25 L7.5,0.3 H11.7 L14.8,3.25 M7.5,0.3 V8.25 H0.3 L3.3,11.4 M0.3,8.25 V11.4 L3.3,14.5 M7.5,8.25 L10.6,11.4" fill="none" stroke="#606060" stroke-width="1.0" stroke-linejoin="round" stroke-linecap="round"/></g><g transform="translate(84.20,564.20)" ><rect x="0" y="0" width="7.8" height="6.7" fill="#3f77cc"/><rect x="0.3" y="6.7" width="7.2" height="1.2" fill="#a9c4ea" opacity=".8"/><rect x="0.9" y="0.8" width="1.7" height="1.5" fill="#7fb2f2"/><rect x="3.1" y="0.8" width="1.7" height="1.5" fill="#7fb2f2"/><rect x="5.6" y="0.8" width="1.5" height="1.5" fill="#7fb2f2"/><rect x="0.9" y="2.9" width="1.7" height="1.4" fill="#6fa4ea"/><rect x="3.1" y="2.9" width="1.7" height="1.4" fill="#6fa4ea"/><rect x="5.6" y="2.9" width="1.5" height="1.4" fill="#6fa4ea"/><rect x="0.9" y="5.0" width="1.7" height="0.9" fill="#d8e8fb"/><rect x="3.1" y="5.0" width="1.7" height="0.9" fill="#d8e8fb"/><rect x="5.6" y="5.0" width="1.5" height="0.9" fill="#d8e8fb"/></g><rect x="300" y="563" width="2" height="2" fill="#111"/><rect x="300" y="566" width="2" height="2" fill="#111"/><rect x="300" y="576" width="2" height="2" fill="#111"/><rect x="300" y="579" width="2" height="2" fill="#111"/><circle cx="301" cy="572" r="3.05" fill="#2b2b2b"/><g transform="translate(85.00,590.90)" ><path d="M10.6,3.25 H14.8 V14.5 H3.3 V11.4 H10.6 Z" fill="#fff" stroke="#606060" stroke-width="1.0" stroke-linejoin="round"/><path d="M10.6,3.25 L7.5,0.3 H11.7 L14.8,3.25 M7.5,0.3 V8.25 H0.3 L3.3,11.4 M0.3,8.25 V11.4 L3.3,14.5 M7.5,8.25 L10.6,11.4" fill="none" stroke="#606060" stroke-width="1.0" stroke-linejoin="round" stroke-linecap="round"/></g><g transform="translate(84.20,590.20)" ><rect x="0" y="0" width="7.8" height="6.7" fill="#3f77cc"/><rect x="0.3" y="6.7" width="7.2" height="1.2" fill="#a9c4ea" opacity=".8"/><rect x="0.9" y="0.8" width="1.7" height="1.5" fill="#7fb2f2"/><rect x="3.1" y="0.8" width="1.7" height="1.5" fill="#7fb2f2"/><rect x="5.6" y="0.8" width="1.5" height="1.5" fill="#7fb2f2"/><rect x="0.9" y="2.9" width="1.7" height="1.4" fill="#6fa4ea"/><rect x="3.1" y="2.9" width="1.7" height="1.4" fill="#6fa4ea"/><rect x="5.6" y="2.9" width="1.5" height="1.4" fill="#6fa4ea"/><rect x="0.9" y="5.0" width="1.7" height="0.9" fill="#d8e8fb"/><rect x="3.1" y="5.0" width="1.7" height="0.9" fill="#d8e8fb"/><rect x="5.6" y="5.0" width="1.5" height="0.9" fill="#d8e8fb"/></g><rect x="300" y="589" width="2" height="2" fill="#111"/><rect x="300" y="592" width="2" height="2" fill="#111"/><rect x="300" y="602" width="2" height="2" fill="#111"/><rect x="300" y="605" width="2" height="2" fill="#111"/><circle cx="301" cy="598" r="3.05" fill="#2b2b2b"/><g transform="translate(85.00,616.90)" ><path d="M10.6,3.25 H14.8 V14.5 H3.3 V11.4 H10.6 Z" fill="#fff" stroke="#606060" stroke-width="1.0" stroke-linejoin="round"/><path d="M10.6,3.25 L7.5,0.3 H11.7 L14.8,3.25 M7.5,0.3 V8.25 H0.3 L3.3,11.4 M0.3,8.25 V11.4 L3.3,14.5 M7.5,8.25 L10.6,11.4" fill="none" stroke="#606060" stroke-width="1.0" stroke-linejoin="round" stroke-linecap="round"/></g><g transform="translate(84.20,616.20)" ><rect x="0" y="0" width="7.8" height="6.7" fill="#3f77cc"/><rect x="0.3" y="6.7" width="7.2" height="1.2" fill="#a9c4ea" opacity=".8"/><rect x="0.9" y="0.8" width="1.7" height="1.5" fill="#7fb2f2"/><rect x="3.1" y="0.8" width="1.7" height="1.5" fill="#7fb2f2"/><rect x="5.6" y="0.8" width="1.5" height="1.5" fill="#7fb2f2"/><rect x="0.9" y="2.9" width="1.7" height="1.4" fill="#6fa4ea"/><rect x="3.1" y="2.9" width="1.7" height="1.4" fill="#6fa4ea"/><rect x="5.6" y="2.9" width="1.5" height="1.4" fill="#6fa4ea"/><rect x="0.9" y="5.0" width="1.7" height="0.9" fill="#d8e8fb"/><rect x="3.1" y="5.0" width="1.7" height="0.9" fill="#d8e8fb"/><rect x="5.6" y="5.0" width="1.5" height="0.9" fill="#d8e8fb"/></g><rect x="300" y="615" width="2" height="2" fill="#111"/><rect x="300" y="618" width="2" height="2" fill="#111"/><rect x="300" y="628" width="2" height="2" fill="#111"/><rect x="300" y="631" width="2" height="2" fill="#111"/><circle cx="301" cy="624" r="3.05" fill="#2b2b2b"/><path d="M45.30,648.40 L50.00,653.00 L54.70,648.40" fill="none" stroke="#555" stroke-width="2" stroke-linecap="round" stroke-linejoin="round"/><g transform="translate(66.10,644.40)" ><path d="M0.6,0.6 H5.3 L6.7,2.4 H14.5 V11.6 H0.6 Z" fill="#fff" stroke="#8a8a8a" stroke-width="1.2" stroke-linejoin="round"/><path d="M0.6,11.6 H14.5" stroke="#8a8a8a" stroke-width="2.0"/></g><g transform="translate(85.00,668.90)" ><path d="M10.6,3.25 H14.8 V14.5 H3.3 V11.4 H10.6 Z" fill="#fff" stroke="#606060" stroke-width="1.0" stroke-linejoin="round"/><path d="M10.6,3.25 L7.5,0.3 H11.7 L14.8,3.25 M7.5,0.3 V8.25 H0.3 L3.3,11.4 M0.3,8.25 V11.4 L3.3,14.5 M7.5,8.25 L10.6,11.4" fill="none" stroke="#606060" stroke-width="1.0" stroke-linejoin="round" stroke-linecap="round"/></g><g transform="translate(84.20,668.20)" ><rect x="0" y="0" width="7.8" height="6.7" fill="#3f77cc"/><rect x="0.3" y="6.7" width="7.2" height="1.2" fill="#a9c4ea" opacity=".8"/><rect x="0.9" y="0.8" width="1.7" height="1.5" fill="#7fb2f2"/><rect x="3.1" y="0.8" width="1.7" height="1.5" fill="#7fb2f2"/><rect x="5.6" y="0.8" width="1.5" height="1.5" fill="#7fb2f2"/><rect x="0.9" y="2.9" width="1.7" height="1.4" fill="#6fa4ea"/><rect x="3.1" y="2.9" width="1.7" height="1.4" fill="#6fa4ea"/><rect x="5.6" y="2.9" width="1.5" height="1.4" fill="#6fa4ea"/><rect x="0.9" y="5.0" width="1.7" height="0.9" fill="#d8e8fb"/><rect x="3.1" y="5.0" width="1.7" height="0.9" fill="#d8e8fb"/><rect x="5.6" y="5.0" width="1.5" height="0.9" fill="#d8e8fb"/></g><rect x="300" y="667" width="2" height="2" fill="#111"/><rect x="300" y="670" width="2" height="2" fill="#111"/><rect x="300" y="680" width="2" height="2" fill="#111"/><rect x="300" y="683" width="2" height="2" fill="#111"/><circle cx="301" cy="676" r="3.05" fill="#2b2b2b"/><g transform="translate(85.00,694.90)" ><path d="M10.6,3.25 H14.8 V14.5 H3.3 V11.4 H10.6 Z" fill="#fff" stroke="#606060" stroke-width="1.0" stroke-linejoin="round"/><path d="M10.6,3.25 L7.5,0.3 H11.7 L14.8,3.25 M7.5,0.3 V8.25 H0.3 L3.3,11.4 M0.3,8.25 V11.4 L3.3,14.5 M7.5,8.25 L10.6,11.4" fill="none" stroke="#606060" stroke-width="1.0" stroke-linejoin="round" stroke-linecap="round"/></g><g transform="translate(84.20,694.20)" ><rect x="0" y="0" width="7.8" height="6.7" fill="#3f77cc"/><rect x="0.3" y="6.7" width="7.2" height="1.2" fill="#a9c4ea" opacity=".8"/><rect x="0.9" y="0.8" width="1.7" height="1.5" fill="#7fb2f2"/><rect x="3.1" y="0.8" width="1.7" height="1.5" fill="#7fb2f2"/><rect x="5.6" y="0.8" width="1.5" height="1.5" fill="#7fb2f2"/><rect x="0.9" y="2.9" width="1.7" height="1.4" fill="#6fa4ea"/><rect x="3.1" y="2.9" width="1.7" height="1.4" fill="#6fa4ea"/><rect x="5.6" y="2.9" width="1.5" height="1.4" fill="#6fa4ea"/><rect x="0.9" y="5.0" width="1.7" height="0.9" fill="#d8e8fb"/><rect x="3.1" y="5.0" width="1.7" height="0.9" fill="#d8e8fb"/><rect x="5.6" y="5.0" width="1.5" height="0.9" fill="#d8e8fb"/></g><rect x="300" y="693" width="2" height="2" fill="#111"/><rect x="300" y="696" width="2" height="2" fill="#111"/><rect x="300" y="706" width="2" height="2" fill="#111"/><rect x="300" y="709" width="2" height="2" fill="#111"/><circle cx="301" cy="702" r="3.05" fill="#2b2b2b"/><path d="M45.30,726.40 L50.00,731.00 L54.70,726.40" fill="none" stroke="#555" stroke-width="2" stroke-linecap="round" stroke-linejoin="round"/><g transform="translate(66.10,722.40)" ><path d="M0.6,0.6 H5.3 L6.7,2.4 H14.5 V11.6 H0.6 Z" fill="#fff" stroke="#8a8a8a" stroke-width="1.2" stroke-linejoin="round"/><path d="M0.6,11.6 H14.5" stroke="#8a8a8a" stroke-width="2.0"/></g><g transform="translate(85.00,746.90)" ><path d="M10.6,3.25 H14.8 V14.5 H3.3 V11.4 H10.6 Z" fill="#fff" stroke="#606060" stroke-width="1.0" stroke-linejoin="round"/><path d="M10.6,3.25 L7.5,0.3 H11.7 L14.8,3.25 M7.5,0.3 V8.25 H0.3 L3.3,11.4 M0.3,8.25 V11.4 L3.3,14.5 M7.5,8.25 L10.6,11.4" fill="none" stroke="#606060" stroke-width="1.0" stroke-linejoin="round" stroke-linecap="round"/></g><g transform="translate(84.20,746.20)" ><rect x="0" y="0" width="7.8" height="6.7" fill="#3f77cc"/><rect x="0.3" y="6.7" width="7.2" height="1.2" fill="#a9c4ea" opacity=".8"/><rect x="0.9" y="0.8" width="1.7" height="1.5" fill="#7fb2f2"/><rect x="3.1" y="0.8" width="1.7" height="1.5" fill="#7fb2f2"/><rect x="5.6" y="0.8" width="1.5" height="1.5" fill="#7fb2f2"/><rect x="0.9" y="2.9" width="1.7" height="1.4" fill="#6fa4ea"/><rect x="3.1" y="2.9" width="1.7" height="1.4" fill="#6fa4ea"/><rect x="5.6" y="2.9" width="1.5" height="1.4" fill="#6fa4ea"/><rect x="0.9" y="5.0" width="1.7" height="0.9" fill="#d8e8fb"/><rect x="3.1" y="5.0" width="1.7" height="0.9" fill="#d8e8fb"/><rect x="5.6" y="5.0" width="1.5" height="0.9" fill="#d8e8fb"/></g><rect x="300" y="745" width="2" height="2" fill="#111"/><rect x="300" y="748" width="2" height="2" fill="#111"/><rect x="300" y="758" width="2" height="2" fill="#111"/><rect x="300" y="761" width="2" height="2" fill="#111"/><circle cx="301" cy="754" r="3.05" fill="#2b2b2b"/><g transform="translate(85.00,772.90)" ><path d="M10.6,3.25 H14.8 V14.5 H3.3 V11.4 H10.6 Z" fill="#fff" stroke="#606060" stroke-width="1.0" stroke-linejoin="round"/><path d="M10.6,3.25 L7.5,0.3 H11.7 L14.8,3.25 M7.5,0.3 V8.25 H0.3 L3.3,11.4 M0.3,8.25 V11.4 L3.3,14.5 M7.5,8.25 L10.6,11.4" fill="none" stroke="#606060" stroke-width="1.0" stroke-linejoin="round" stroke-linecap="round"/></g><g transform="translate(84.20,772.20)" ><rect x="0" y="0" width="7.8" height="6.7" fill="#3f77cc"/><rect x="0.3" y="6.7" width="7.2" height="1.2" fill="#a9c4ea" opacity=".8"/><rect x="0.9" y="0.8" width="1.7" height="1.5" fill="#7fb2f2"/><rect x="3.1" y="0.8" width="1.7" height="1.5" fill="#7fb2f2"/><rect x="5.6" y="0.8" width="1.5" height="1.5" fill="#7fb2f2"/><rect x="0.9" y="2.9" width="1.7" height="1.4" fill="#6fa4ea"/><rect x="3.1" y="2.9" width="1.7" height="1.4" fill="#6fa4ea"/><rect x="5.6" y="2.9" width="1.5" height="1.4" fill="#6fa4ea"/><rect x="0.9" y="5.0" width="1.7" height="0.9" fill="#d8e8fb"/><rect x="3.1" y="5.0" width="1.7" height="0.9" fill="#d8e8fb"/><rect x="5.6" y="5.0" width="1.5" height="0.9" fill="#d8e8fb"/></g><rect x="300" y="771" width="2" height="2" fill="#111"/><rect x="300" y="774" width="2" height="2" fill="#111"/><rect x="300" y="784" width="2" height="2" fill="#111"/><rect x="300" y="787" width="2" height="2" fill="#111"/><circle cx="301" cy="780" r="3.05" fill="#2b2b2b"/><g transform="translate(85.00,798.90)" ><path d="M10.6,3.25 H14.8 V14.5 H3.3 V11.4 H10.6 Z" fill="#fff" stroke="#606060" stroke-width="1.0" stroke-linejoin="round"/><path d="M10.6,3.25 L7.5,0.3 H11.7 L14.8,3.25 M7.5,0.3 V8.25 H0.3 L3.3,11.4 M0.3,8.25 V11.4 L3.3,14.5 M7.5,8.25 L10.6,11.4" fill="none" stroke="#606060" stroke-width="1.0" stroke-linejoin="round" stroke-linecap="round"/></g><g transform="translate(84.20,798.20)" ><rect x="0" y="0" width="7.8" height="6.7" fill="#3f77cc"/><rect x="0.3" y="6.7" width="7.2" height="1.2" fill="#a9c4ea" opacity=".8"/><rect x="0.9" y="0.8" width="1.7" height="1.5" fill="#7fb2f2"/><rect x="3.1" y="0.8" width="1.7" height="1.5" fill="#7fb2f2"/><rect x="5.6" y="0.8" width="1.5" height="1.5" fill="#7fb2f2"/><rect x="0.9" y="2.9" width="1.7" height="1.4" fill="#6fa4ea"/><rect x="3.1" y="2.9" width="1.7" height="1.4" fill="#6fa4ea"/><rect x="5.6" y="2.9" width="1.5" height="1.4" fill="#6fa4ea"/><rect x="0.9" y="5.0" width="1.7" height="0.9" fill="#d8e8fb"/><rect x="3.1" y="5.0" width="1.7" height="0.9" fill="#d8e8fb"/><rect x="5.6" y="5.0" width="1.5" height="0.9" fill="#d8e8fb"/></g><rect x="300" y="797" width="2" height="2" fill="#111"/><rect x="300" y="800" width="2" height="2" fill="#111"/><rect x="300" y="810" width="2" height="2" fill="#111"/><rect x="300" y="813" width="2" height="2" fill="#111"/><circle cx="301" cy="806" r="3.05" fill="#2b2b2b"/><path d="M66.70,828.40 L71.20,833.00 L66.70,837.60" fill="none" stroke="#555" stroke-width="2" stroke-linecap="round" stroke-linejoin="round"/><g transform="translate(85.00,823.80)" ><path d="M2.5,11.8 H14.8 V15.95 H2.5 Z M2.5,11.8 L0.2,9.3 V13.9 L2.5,15.95 M0.2,9.3 H12.5 L14.8,11.8" fill="#fff" stroke="#606060" stroke-width="1" stroke-linejoin="round"/><path d="M1.9,6.4 V9.3 a2.7,1.05 0 0 0 5.4,0 V6.4" fill="#fff" stroke="#606060" stroke-width="1"/><ellipse cx="4.6" cy="6.4" rx="2.7" ry="1.05" fill="#fff" stroke="#606060" stroke-width="1"/><path d="M8.1,1.4 V4.2 a2.9,1.3 0 0 0 5.8,0 V1.4" fill="#fff" stroke="#606060" stroke-width="1"/><ellipse cx="11" cy="1.4" rx="2.9" ry="1.05" fill="#fff" stroke="#606060" stroke-width="1"/><path d="M11,5.5 V8.9" stroke="#606060" stroke-width="1"/><ellipse cx="11" cy="9.3" rx="1.6" ry="0.6" fill="none" stroke="#606060" stroke-width=".8"/></g><path d="M66.70,854.40 L71.20,859.00 L66.70,863.60" fill="none" stroke="#555" stroke-width="2" stroke-linecap="round" stroke-linejoin="round"/><g transform="translate(85.00,850.90)" ><path d="M10.6,3.25 H14.8 V14.5 H3.3 V11.4 H10.6 Z" fill="#fff" stroke="#606060" stroke-width="1.0" stroke-linejoin="round"/><path d="M10.6,3.25 L7.5,0.3 H11.7 L14.8,3.25 M7.5,0.3 V8.25 H0.3 L3.3,11.4 M0.3,8.25 V11.4 L3.3,14.5 M7.5,8.25 L10.6,11.4" fill="none" stroke="#606060" stroke-width="1.0" stroke-linejoin="round" stroke-linecap="round"/></g><g transform="translate(84.20,850.20)" ><rect x="0" y="0" width="7.8" height="6.7" fill="#3f77cc"/><rect x="0.3" y="6.7" width="7.2" height="1.2" fill="#a9c4ea" opacity=".8"/><rect x="0.9" y="0.8" width="1.7" height="1.5" fill="#7fb2f2"/><rect x="3.1" y="0.8" width="1.7" height="1.5" fill="#7fb2f2"/><rect x="5.6" y="0.8" width="1.5" height="1.5" fill="#7fb2f2"/><rect x="0.9" y="2.9" width="1.7" height="1.4" fill="#6fa4ea"/><rect x="3.1" y="2.9" width="1.7" height="1.4" fill="#6fa4ea"/><rect x="5.6" y="2.9" width="1.5" height="1.4" fill="#6fa4ea"/><rect x="0.9" y="5.0" width="1.7" height="0.9" fill="#d8e8fb"/><rect x="3.1" y="5.0" width="1.7" height="0.9" fill="#d8e8fb"/><rect x="5.6" y="5.0" width="1.5" height="0.9" fill="#d8e8fb"/></g><rect x="300" y="849" width="2" height="2" fill="#111"/><rect x="300" y="852" width="2" height="2" fill="#111"/><rect x="300" y="862" width="2" height="2" fill="#111"/><rect x="300" y="865" width="2" height="2" fill="#111"/><circle cx="301" cy="858" r="3.05" fill="#2b2b2b"/><path d="M66.70,880.40 L71.20,885.00 L66.70,889.60" fill="none" stroke="#555" stroke-width="2" stroke-linecap="round" stroke-linejoin="round"/><g transform="translate(85.00,875.80)" ><path d="M2.5,11.8 H14.8 V15.95 H2.5 Z M2.5,11.8 L0.2,9.3 V13.9 L2.5,15.95 M0.2,9.3 H12.5 L14.8,11.8" fill="#fff" stroke="#606060" stroke-width="1" stroke-linejoin="round"/><path d="M1.9,6.4 V9.3 a2.7,1.05 0 0 0 5.4,0 V6.4" fill="#fff" stroke="#606060" stroke-width="1"/><ellipse cx="4.6" cy="6.4" rx="2.7" ry="1.05" fill="#fff" stroke="#606060" stroke-width="1"/><path d="M8.1,1.4 V4.2 a2.9,1.3 0 0 0 5.8,0 V1.4" fill="#fff" stroke="#606060" stroke-width="1"/><ellipse cx="11" cy="1.4" rx="2.9" ry="1.05" fill="#fff" stroke="#606060" stroke-width="1"/><path d="M11,5.5 V8.9" stroke="#606060" stroke-width="1"/><ellipse cx="11" cy="9.3" rx="1.6" ry="0.6" fill="none" stroke="#606060" stroke-width=".8"/></g><path d="M66.70,906.40 L71.20,911.00 L66.70,915.60" fill="none" stroke="#555" stroke-width="2" stroke-linecap="round" stroke-linejoin="round"/><g transform="translate(85.00,902.90)" ><path d="M10.6,3.25 H14.8 V14.5 H3.3 V11.4 H10.6 Z" fill="#fff" stroke="#606060" stroke-width="1.0" stroke-linejoin="round"/><path d="M10.6,3.25 L7.5,0.3 H11.7 L14.8,3.25 M7.5,0.3 V8.25 H0.3 L3.3,11.4 M0.3,8.25 V11.4 L3.3,14.5 M7.5,8.25 L10.6,11.4" fill="none" stroke="#606060" stroke-width="1.0" stroke-linejoin="round" stroke-linecap="round"/></g><g transform="translate(84.20,902.20)" ><rect x="0" y="0" width="7.8" height="6.7" fill="#3f77cc"/><rect x="0.3" y="6.7" width="7.2" height="1.2" fill="#a9c4ea" opacity=".8"/><rect x="0.9" y="0.8" width="1.7" height="1.5" fill="#7fb2f2"/><rect x="3.1" y="0.8" width="1.7" height="1.5" fill="#7fb2f2"/><rect x="5.6" y="0.8" width="1.5" height="1.5" fill="#7fb2f2"/><rect x="0.9" y="2.9" width="1.7" height="1.4" fill="#6fa4ea"/><rect x="3.1" y="2.9" width="1.7" height="1.4" fill="#6fa4ea"/><rect x="5.6" y="2.9" width="1.5" height="1.4" fill="#6fa4ea"/><rect x="0.9" y="5.0" width="1.7" height="0.9" fill="#d8e8fb"/><rect x="3.1" y="5.0" width="1.7" height="0.9" fill="#d8e8fb"/><rect x="5.6" y="5.0" width="1.5" height="0.9" fill="#d8e8fb"/></g><rect x="300" y="901" width="2" height="2" fill="#111"/><rect x="300" y="904" width="2" height="2" fill="#111"/><rect x="300" y="914" width="2" height="2" fill="#111"/><rect x="300" y="917" width="2" height="2" fill="#111"/><circle cx="301" cy="910" r="3.05" fill="#2b2b2b"/><path d="M45.30,934.40 L50.00,939.00 L54.70,934.40" fill="none" stroke="#555" stroke-width="2" stroke-linecap="round" stroke-linejoin="round"/><path d="M45.30,960.40 L50.00,965.00 L54.70,960.40" fill="none" stroke="#555" stroke-width="2" stroke-linecap="round" stroke-linejoin="round"/><path d="M45.30,986.40 L50.00,991.00 L54.70,986.40" fill="none" stroke="#555" stroke-width="2" stroke-linecap="round" stroke-linejoin="round"/><path d="M66.70,1010.40 L71.20,1015.00 L66.70,1019.60" fill="none" stroke="#555" stroke-width="2" stroke-linecap="round" stroke-linejoin="round"/><g transform="translate(86.20,1007.00)" ><path d="M0.4,3.2 V11.6 a6,3 0 0 0 12,0 V3.2" fill="#fff" stroke="#c4c4c4" stroke-width="1"/><path d="M0.4,7 L2.5,8.2 V10.3 Q6.4,12.2 10.3,10.3 V8.2 L12.4,7 V11.6 a6,3 0 0 1 -12,0 Z" fill="#dcdcdc" stroke="#c4c4c4" stroke-width=".8"/><ellipse cx="6.4" cy="3.2" rx="6" ry="2.9" fill="#fff" stroke="#c4c4c4" stroke-width="1"/><path d="M0.4,6.4 a6,3 0 0 0 12,0" fill="none" stroke="#c4c4c4" stroke-width=".8"/></g><path d="M66.70,1036.40 L71.20,1041.00 L66.70,1045.60" fill="none" stroke="#555" stroke-width="2" stroke-linecap="round" stroke-linejoin="round"/><g transform="translate(86.20,1033.00)" ><path d="M0.4,3.2 V11.6 a6,3 0 0 0 12,0 V3.2" fill="#fff" stroke="#c4c4c4" stroke-width="1"/><path d="M0.4,7 L2.5,8.2 V10.3 Q6.4,12.2 10.3,10.3 V8.2 L12.4,7 V11.6 a6,3 0 0 1 -12,0 Z" fill="#dcdcdc" stroke="#c4c4c4" stroke-width=".8"/><ellipse cx="6.4" cy="3.2" rx="6" ry="2.9" fill="#fff" stroke="#c4c4c4" stroke-width="1"/><path d="M0.4,6.4 a6,3 0 0 0 12,0" fill="none" stroke="#c4c4c4" stroke-width=".8"/></g><path d="M393.4,547.4 L396,550.2 L398.6,547.4" fill="none" stroke="#333" stroke-width="1.3" stroke-linecap="round"/><path d="M396,552.4 V564.8" stroke="#8a8a8a" stroke-width="1.4"/><path d="M401.2,548.4 H411 M398.3,553.5 H411 M398.3,558.6 H411 M398.3,563.6 H411" stroke="#222" stroke-width="1.2" stroke-linecap="round"/><circle cx="14.1" cy="52.7" r="3.1" fill="none" stroke="#2e2e2e" stroke-width="1.8"/><path d="M14.1,56 V65 M14.1,63 C14.1,59 20.9,61.5 20.9,57.8" fill="none" stroke="#2e2e2e" stroke-width="1.7"/><circle cx="14.1" cy="65.2" r="2.1" fill="#2e2e2e"/><circle cx="20.9" cy="57.8" r="2.1" fill="#2e2e2e"/><path d="M20.2,50.9 H30 M24.8,55.8 H30 M24.8,60.7 H30 M20.2,65.8 H30" stroke="#1f1f1f" stroke-width="1.8"/><rect x="15.2" y="84.3" width="1.7" height="1.6" fill="#111"/><rect x="15.2" y="87.7" width="1.7" height="1.6" fill="#111"/><rect x="15.2" y="97.4" width="1.7" height="1.6" fill="#111"/><rect x="15.2" y="100.4" width="1.7" height="1.6" fill="#111"/><circle cx="16" cy="93" r="3" fill="#2e2e2e"/><path d="M21.1,98.1 H28.9 M25,94.2 V102" stroke="#1b5cab" stroke-width="2"/><ellipse cx="20" cy="126.1" rx="9.6" ry="6.3" fill="#2e2e2e"/><path d="M15.5,130.5 L12.2,135.9 L19.5,131.8 Z" fill="#2e2e2e"/><rect x="13.4" y="155.3" width="11.6" height="15.4" rx="1.6" fill="none" stroke="#2e2e2e" stroke-width="1.9"/><path d="M15.6,158.6 H22.6 M15.6,161 H22.6 M15.6,163.3 H19.4" stroke="#2e2e2e" stroke-width="1.2"/><path d="M27.6,160.6 L20.2,167.2" stroke="#2e2e2e" stroke-width="3.2"/><path d="M18.8,168.9 l0.6,-2.6 l2,2 z" fill="#2e2e2e"/><path d="M17.2,203.7 A7,7 0 1 0 17.2,193.4" fill="none" stroke="#2e2e2e" stroke-width="1.9" stroke-linecap="round"/><path d="M18.6,189.9 H24.2 M21.4,189.9 V192 M27,191.6 l1.3,1.3" stroke="#2e2e2e" stroke-width="1.7"/><path d="M11.6,196.1 H16 M11,198.4 H15.4 M12.2,200.7 H16" stroke="#2e2e2e" stroke-width="1.2"/><path d="M21.2,199.2 L24,195.9" stroke="#2e2e2e" stroke-width="1.9" stroke-linecap="round"/><path d="M0,216.5 H39" stroke="#dcdcdc" stroke-width="1"/><rect x="13.3" y="226.3" width="13.4" height="15.4" rx="1.8" fill="none" stroke="#2e2e2e" stroke-width="1.9"/><path d="M20,230.2 H24.8" stroke="#111" stroke-width="2"/><path d="M15,230.2 l1.2,1.2 l2.2,-2.6" fill="none" stroke="#2e2e2e" stroke-width="1"/><path d="M20,233.9 H24.8" stroke="#111" stroke-width="2"/><path d="M15,233.9 l1.2,1.2 l2.2,-2.6" fill="none" stroke="#2e2e2e" stroke-width="1"/><path d="M20,237.5 H24.8" stroke="#111" stroke-width="2"/><path d="M15,237.5 l1.2,1.2 l2.2,-2.6" fill="none" stroke="#2e2e2e" stroke-width="1"/><path d="M11.2,1059.6 H28 V1064 M11.2,1059.6 V1067.4 H16" fill="#2e2e2e" stroke="#2e2e2e" stroke-width="1"/><path d="M11.2,1059.6 H28 V1063 A6,6 0 0 0 16.6,1067.4 H11.2 Z" fill="#2e2e2e"/><circle cx="21.8" cy="1066.6" r="4.3" fill="#fafafa" stroke="#2e2e2e" stroke-width="1.8"/><path d="M25,1069.8 L28.6,1073.2" stroke="#2e2e2e" stroke-width="2.4" stroke-linecap="round"/></svg>
<div id="bottombar"></div>
<div class="abs" style="left:235px;top:1050px;width:199.4px;height:27.6px;background:#fff;border-bottom:2.2px solid #1b56b0;border-radius:0 0 3px 3px"></div>
<div class="abs" style="left:435.6px;top:1050.6px;width:201.6px;height:26px;background:#e7e7e7;border-radius:3px"></div>
<svg class="i" style="left:0;top:1040px" width="1920" height="40" viewBox="0 1040 1920 40"><path d="M49,1064.5 H64 M56.5,1057 V1072" stroke="#555" stroke-width="2.4"/><path d="M75.4,1050.6 H110.2 L116.6,1063.8 L110.2,1077 H75.4 Q73.9,1077 73.9,1075.5 V1052.1 Q73.9,1050.6 75.4,1050.6 Z" fill="#ebebeb"/><path d="M82.6,1063.4 L91.8,1054.2 L95.4,1057.8 V1055.4 H98 V1060.4 L101,1063.4 H98.6 V1071 H93.8 V1065.8 H89.8 V1071 H85 V1063.4 Z" fill="#575757"/><path d="M109.6,1050.6 H226.4 L232.8,1063.8 L226.4,1077 H109.6 L116,1063.8 Z" fill="#fcfcfc"/><path d="M226.4,1050.6 H234.6 V1077 H226.4 L232.8,1063.8 Z" fill="#cfcfcf"/><path d="M126.6,1055.6 H133 L134.8,1057.8 H143.4 V1068.4 H126.6 Z" fill="none" stroke="#4a4a4a" stroke-width="1.4" stroke-linejoin="round"/><path d="M246.4,1056.8 L249.6,1054.4 H262.4 L263.2,1055.2 V1068 L260,1071.2 H247.2 L246.4,1070.4 Z" fill="#fff" stroke="#333" stroke-width="1.2" stroke-linejoin="round"/><path d="M246.6,1057 H260 V1071 M260,1057 L263,1054.6" fill="none" stroke="#333" stroke-width="1.1"/><rect x="250.2" y="1056.4" width="10.8" height="11" fill="#8e8e8e" stroke="#555" stroke-width=".8"/><path d="M457.6,1057 L459.8,1054.6 H464 L465.8,1057 V1071.4 H457.6 Z M457.6,1057 H465.8" fill="#e7e7e7" stroke="#444" stroke-width="1.2" stroke-linejoin="round"/><path d="M449.6,1060 L451.6,1058 H455.6 L457.4,1060 V1071.4 H449.6 Z M449.6,1060 H457.4" fill="#e7e7e7" stroke="#444" stroke-width="1.2" stroke-linejoin="round"/></svg>
<span class="t" style="left:149.18px;top:1055.10px;font-size:15px;color:#666;transform:scaleX(0.9124)">Exercise 1</span>
<span class="t" style="left:267.38px;top:1055.60px;font-size:15px;color:#333;transform:scaleX(0.9300)">Exercise 1 Assembly</span>
<span class="t" style="left:469.38px;top:1055.60px;font-size:15px;color:#6a6a6a;transform:scaleX(0.9157)">Exercise 1 Part Studio</span>
</body></html>
